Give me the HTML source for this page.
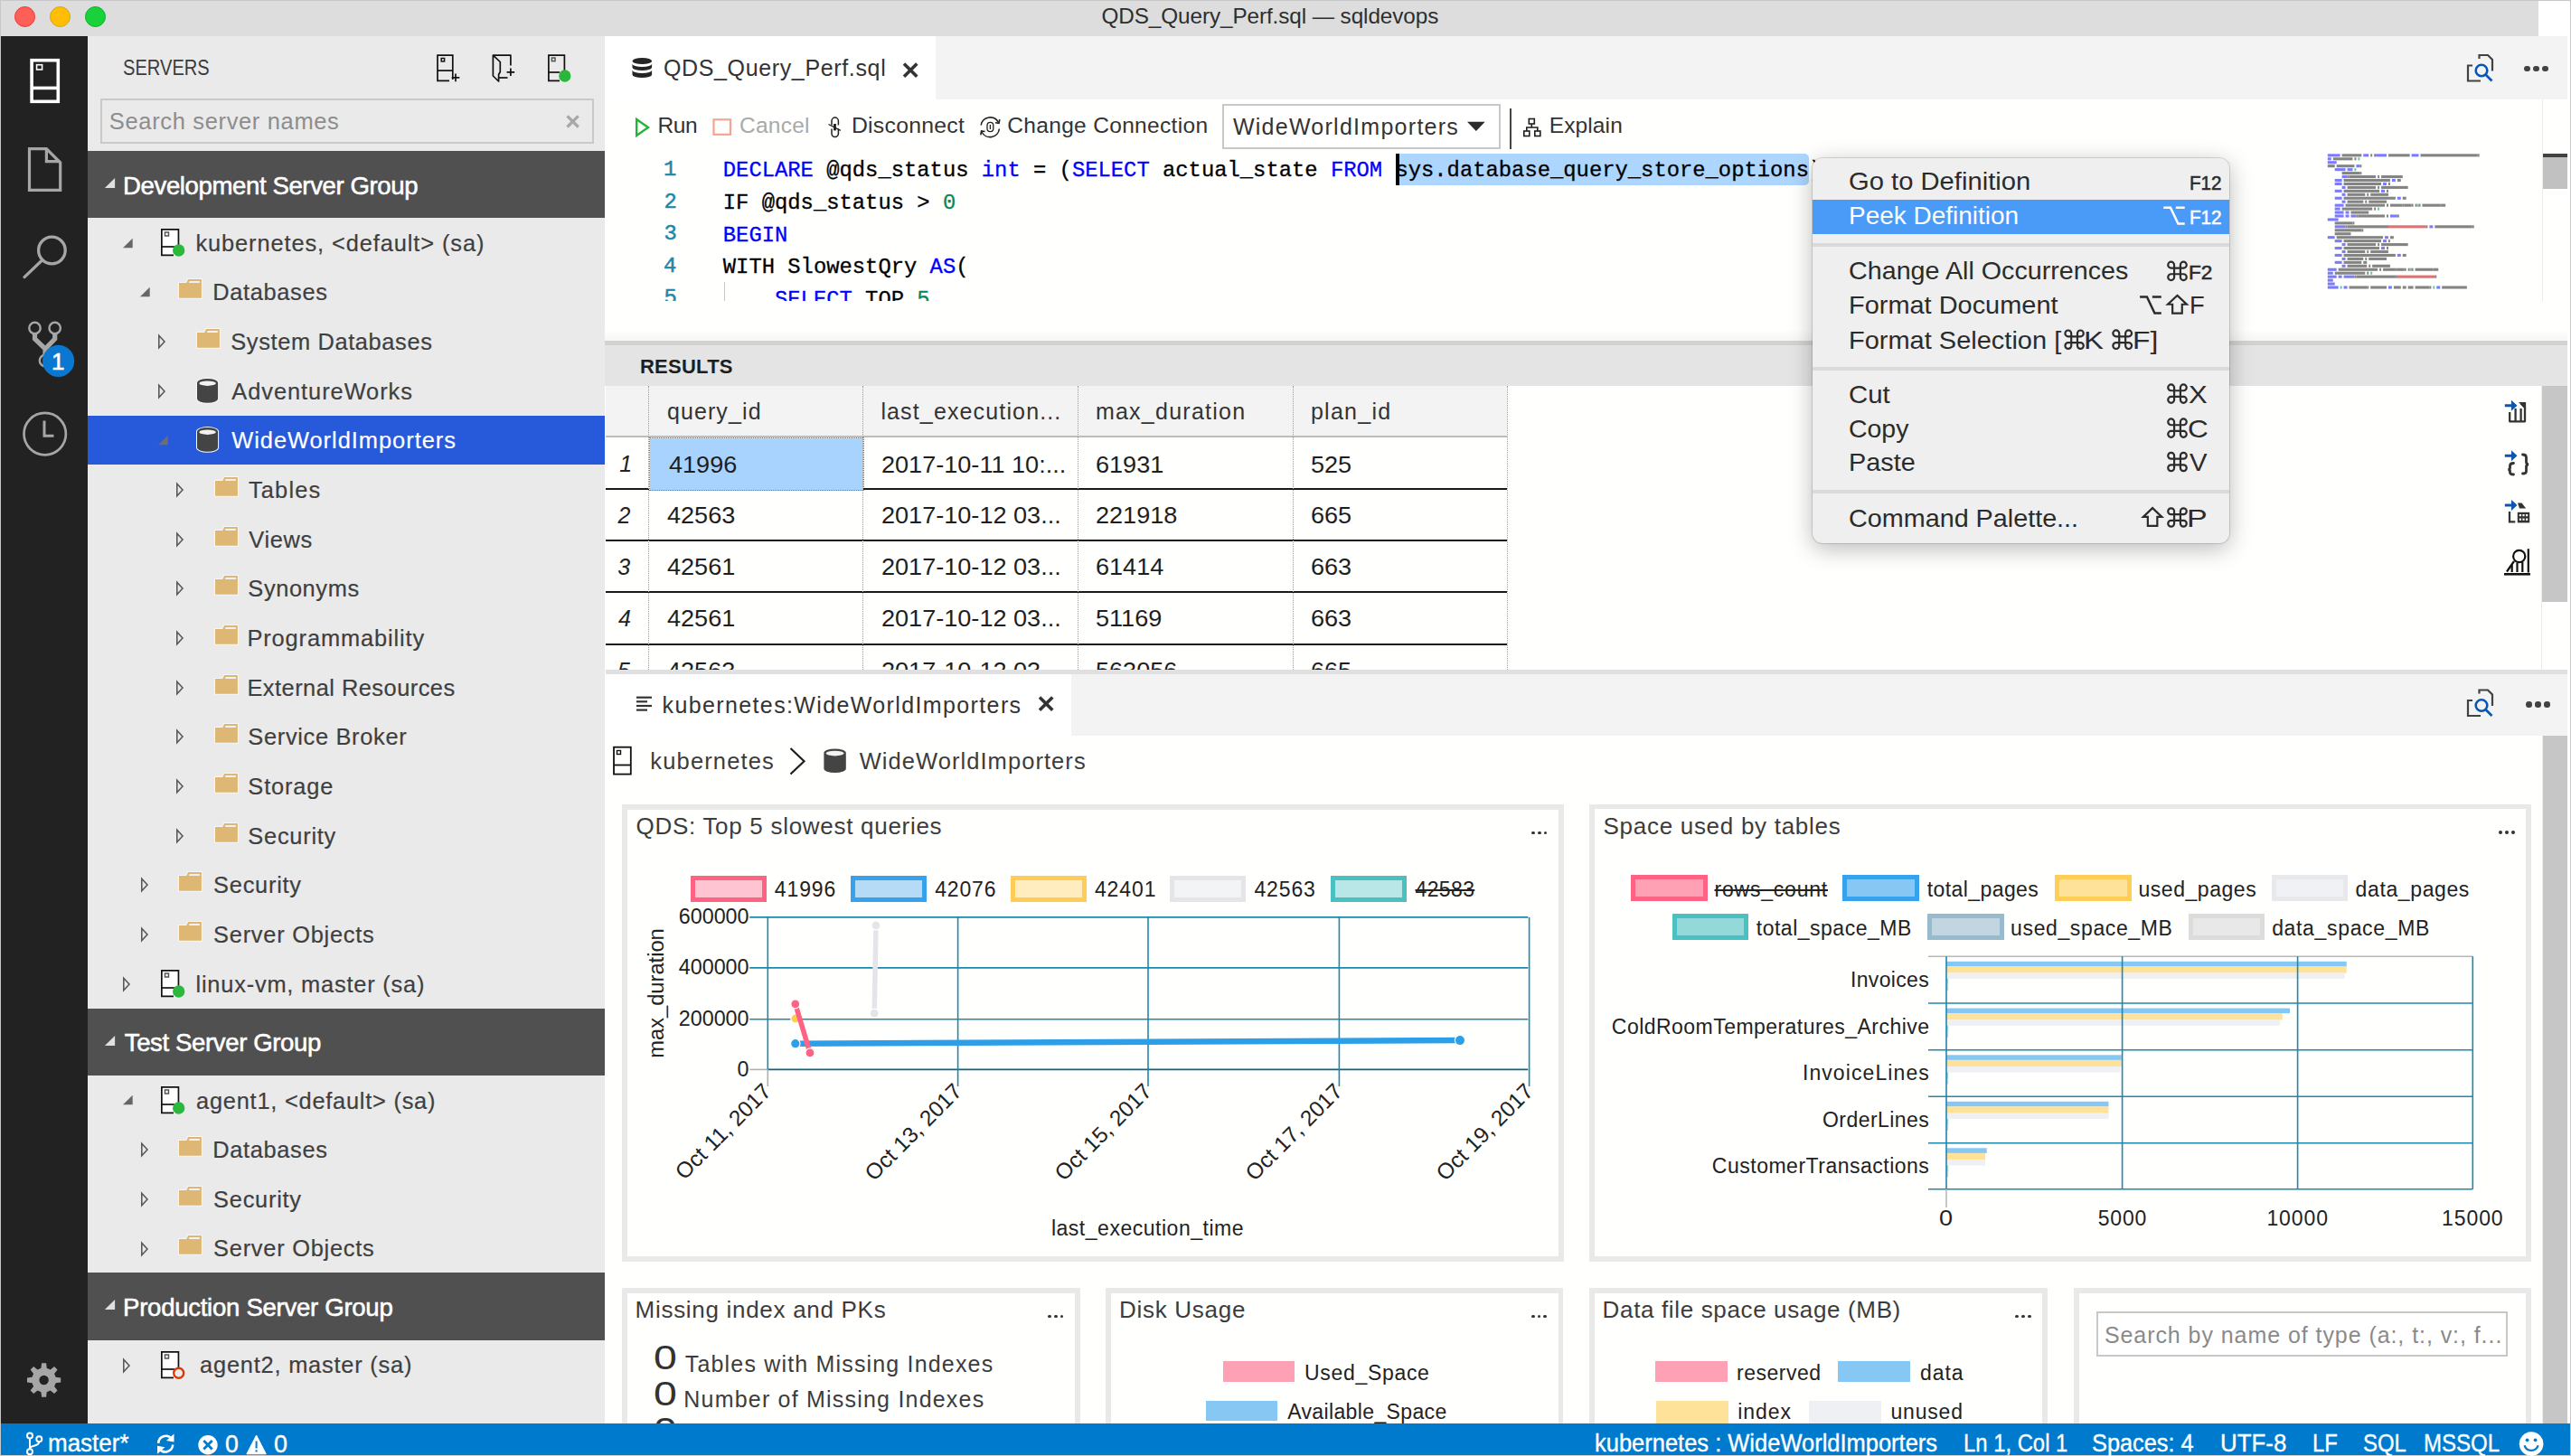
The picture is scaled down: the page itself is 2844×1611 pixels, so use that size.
<!DOCTYPE html><html><head><meta charset="utf-8"><style>
html,body{margin:0;padding:0;width:2844px;height:1611px;overflow:hidden;background:#fff;}
body>div,body>svg{position:absolute;}
.t{white-space:nowrap;}
</style></head><body>
<div style="left:0px;top:0px;width:2844px;height:1611px;background:#c8c8c8;"></div>
<div style="left:1px;top:1px;width:2842px;height:1609px;background:#ffffff;"></div>
<div style="left:1px;top:1px;width:2807px;height:39px;background:#dddddd;"></div>
<div style="left:16.0px;top:6.899999999999999px;width:23px;height:23px;box-sizing:border-box;border-radius:50%;background:#fe5f57;border:1.1px solid #e33e37"></div>
<div style="left:55.0px;top:6.899999999999999px;width:23px;height:23px;box-sizing:border-box;border-radius:50%;background:#ffbd04;border:1.1px solid #e3a204"></div>
<div style="left:94.0px;top:6.899999999999999px;width:23px;height:23px;box-sizing:border-box;border-radius:50%;background:#18d13b;border:1.1px solid #0bb128"></div>
<div class="t" style="left:1218.41px;top:5.93px;font-size:24.3px;line-height:24.3px;color:#2e2e2e;font-family:'Liberation Sans',sans-serif;letter-spacing:-0.086px;">QDS_Query_Perf.sql — sqldevops</div>
<div style="left:1px;top:40px;width:96px;height:1535px;background:#222222;"></div>
<svg style="left:20px;top:55px;" width="60" height="70" viewBox="20 55 60 70"><g fill="none" stroke="#fff" stroke-width="3.6"><rect x="35.1" y="66.7" width="29.2" height="45.6"/><line x1="35" y1="97.4" x2="64.5" y2="97.4"/><rect x="40.6" y="71.7" width="6" height="5.3" stroke-width="1.6"/></g></svg>
<svg style="left:20px;top:150px;" width="60" height="70" viewBox="20 150 60 70"><path d="M32.5 164.7 H51.4 L66.7 180 V210.3 H32.5 Z M51.4 164.7 V178.6 H66.7" fill="none" stroke="#a6a6a6" stroke-width="3.2"/></svg>
<svg style="left:15px;top:250px;" width="60" height="70" viewBox="15 250 60 70"><g fill="none" stroke="#a6a6a6" stroke-width="3.3" stroke-linecap="round"><circle cx="57.4" cy="277" r="14.8"/><line x1="46.5" y1="288" x2="27" y2="306.6"/></g></svg>
<svg style="left:20px;top:340px;" width="70" height="80" viewBox="20 340 70 80"><g fill="none" stroke="#a6a6a6"><circle cx="38.5" cy="363" r="6.2" stroke-width="2.4"/><circle cx="60.7" cy="363" r="6.2" stroke-width="2.4"/><circle cx="50" cy="399" r="6.2" stroke-width="2.4"/><path d="M38.5 369 V375 L50 386 L60.7 375 V369 M50 386 V393" stroke-width="5.2" stroke-linejoin="miter"/></g><circle cx="64.6" cy="399.4" r="17.6" fill="#0a78d0"/></svg>
<div class="t" style="left:56.99px;top:387.19px;font-size:26px;line-height:26px;color:#fff;font-family:'Liberation Sans',sans-serif;-webkit-text-stroke:0.6px #fff;">1</div>
<svg style="left:15px;top:445px;" width="70" height="70" viewBox="15 445 70 70"><g fill="none" stroke="#a6a6a6"><circle cx="49.7" cy="480.1" r="23.2" stroke-width="2.7"/><path d="M49 465.5 V482.3 H59.5" stroke-width="3"/></g></svg>
<svg style="left:20px;top:1500px;" width="60" height="60" viewBox="20 1500 60 60"><path d="M61.73,1523.85 L67.23,1524.50 L67.23,1529.50 L61.73,1530.15 L60.11,1534.05 L63.54,1538.41 L60.01,1541.94 L55.65,1538.51 L51.75,1540.13 L51.10,1545.63 L46.10,1545.63 L45.45,1540.13 L41.55,1538.51 L37.19,1541.94 L33.66,1538.41 L37.09,1534.05 L35.47,1530.15 L29.97,1529.50 L29.97,1524.50 L35.47,1523.85 L37.09,1519.95 L33.66,1515.59 L37.19,1512.06 L41.55,1515.49 L45.45,1513.87 L46.10,1508.37 L51.10,1508.37 L51.75,1513.87 L55.65,1515.49 L60.01,1512.06 L63.54,1515.59 L60.11,1519.95 Z M53.800000000000004,1527 A5.2,5.2 0 1,0 43.4,1527 A5.2,5.2 0 1,0 53.800000000000004,1527 Z" fill="#a6a6a6" fill-rule="evenodd"/></svg>
<div style="left:97px;top:40px;width:572px;height:1535px;background:#eaeaea;"></div>
<div class="t" style="left:136.49px;top:63.96px;font-size:23.2px;line-height:23.2px;color:#3b3b3b;font-family:'Liberation Sans',sans-serif;transform:scaleX(0.8676);transform-origin:0 0;">SERVERS</div>
<svg style="left:478px;top:55px;" width="35" height="40" viewBox="478 55 35 40"><g fill="none" stroke="#111" stroke-width="1.7"><path d="M500.8 88 V61.2 H484 V89.4 H497"/><line x1="484" y1="78.1" x2="500.8" y2="78.1"/><rect x="488.2" y="64.5" width="3.4" height="3.4" stroke-width="1.5"/><path d="M504 81.5 V90.2 M499.7 85.8 H508.3"/></g></svg>
<svg style="left:538px;top:55px;" width="35" height="40" viewBox="538 55 35 40"><g fill="none" stroke="#111" stroke-width="1.7" stroke-linejoin="round"><path d="M564.9 72.5 V61.2 H545.4 L553.3 68.5 V79.5 L551.6 82.5 V90 L545.4 84 V61.2"/><path d="M551.6 86 H561.5"/><path d="M564.9 75.5 V84 M560.6 79.8 H569.2"/></g></svg>
<svg style="left:600px;top:55px;" width="35" height="40" viewBox="600 55 35 40"><g fill="none" stroke="#111" stroke-width="1.7"><path d="M624.4 78 V61.2 H606.9 V89.4 H619"/><line x1="606.9" y1="80" x2="619" y2="80"/><rect x="610.4" y="64" width="3.6" height="3.6" stroke-width="1.5" stroke="#555"/></g><circle cx="624.8" cy="84" r="6.65" fill="#2ab83c"/></svg>
<div style="left:111px;top:108.5px;width:545.5px;height:50.0px;background:#c9c9c9;"></div>
<div style="left:113px;top:110.5px;width:541.5px;height:46.0px;background:#eaeaea;"></div>
<div class="t" style="left:120.85px;top:122.01px;font-size:25.5px;line-height:25.5px;color:#8d8d8d;font-family:'Liberation Sans',sans-serif;letter-spacing:0.648px;">Search server names</div>
<svg style="left:620px;top:120px;" width="30" height="30" viewBox="620 120 30 30"><g stroke="#a8a8a8" stroke-width="3.2"><line x1="627.5" y1="128.3" x2="639.7" y2="140.5"/><line x1="639.7" y1="128.3" x2="627.5" y2="140.5"/></g></svg>
<div style="left:97px;top:166.8px;width:572px;height:74.30000000000001px;background:#505050;"></div>
<svg style="left:110px;top:191.8px;" width="22" height="20" viewBox="110 191.8 22 20"><path d="M115.9 207.9 L127.1 196.70000000000002 V207.9 Z" fill="#e0e0e0"/></svg>
<div class="t" style="left:136.09px;top:191.73px;font-size:27.6px;line-height:27.6px;color:#ffffff;font-family:'Liberation Sans',sans-serif;letter-spacing:-0.408px;-webkit-text-stroke:0.55px #fff;">Development Server Group</div>
<svg style="left:133.6px;top:260.725px;" width="16" height="16" viewBox="133.6 260.725 16 16"><path d="M135.6 273.925 L146.29999999999998 263.52500000000003 V273.925 Z" fill="#666"/></svg>
<svg style="left:175.0px;top:250.22500000000002px;" width="32" height="38" viewBox="175.0 250.22500000000002 32 38"><g fill="none" stroke="#111" stroke-width="1.7"><rect x="178.85" y="254.07500000000002" width="18.6" height="28.5" fill="#fff" stroke="none"/><path d="M197.45 275.225 V254.07500000000002 H178.85 V282.57500000000005 H192.0"/><line x1="178.85" y1="273.225" x2="193.0" y2="273.225"/><rect x="182.5" y="257.225" width="4" height="4" stroke-width="1.5" stroke="#555"/></g><circle cx="197.7" cy="277.225" r="6.7" fill="#2cb83d"/></svg>
<div class="t" style="left:216.45px;top:256.82px;font-size:25.4px;line-height:25.4px;color:#3f3f3f;font-family:'Liberation Sans',sans-serif;letter-spacing:0.902px;-webkit-text-stroke:0.2px #3f3f3f;">kubernetes, &lt;default&gt; (sa)</div>
<svg style="left:153.2px;top:315.375px;" width="16" height="16" viewBox="153.2 315.375 16 16"><path d="M155.2 328.575 L165.89999999999998 318.175 V328.575 Z" fill="#666"/></svg>
<svg style="left:194.9px;top:306.47499999999997px;" width="32" height="28" viewBox="194.9 306.47499999999997 32 28"><path d="M196.9 312.47499999999997 H205.5 L207.20000000000002 308.47499999999997 H223.8 V331.275 H196.9 Z" fill="#f6f7fa"/><path d="M197.9 313.47499999999997 H206.1 L208.0 309.47499999999997 H222.8 V330.275 H197.9 Z" fill="#deb774"/><path d="M208.8 313.37499999999994 L209.5 311.47499999999997 H220.8 V313.37499999999994 Z" fill="#f0f2f8"/></svg>
<div class="t" style="left:235.20px;top:311.47px;font-size:25.4px;line-height:25.4px;color:#3f3f3f;font-family:'Liberation Sans',sans-serif;letter-spacing:0.664px;-webkit-text-stroke:0.2px #3f3f3f;">Databases</div>
<svg style="left:173.2px;top:368.22499999999997px;" width="14" height="20" viewBox="173.2 368.22499999999997 14 20"><path d="M176.0 371.42499999999995 L182.2 378.22499999999997 L176.0 385.025 Z" fill="none" stroke="#5a5a5a" stroke-width="1.6" stroke-linejoin="miter"/></svg>
<svg style="left:214.7px;top:361.12499999999994px;" width="32" height="28" viewBox="214.7 361.12499999999994 32 28"><path d="M216.7 367.12499999999994 H225.29999999999998 L227.0 363.12499999999994 H243.6 V385.92499999999995 H216.7 Z" fill="#f6f7fa"/><path d="M217.7 368.12499999999994 H225.89999999999998 L227.79999999999998 364.12499999999994 H242.6 V384.92499999999995 H217.7 Z" fill="#deb774"/><path d="M228.6 368.0249999999999 L229.29999999999998 366.12499999999994 H240.6 V368.0249999999999 Z" fill="#f0f2f8"/></svg>
<div class="t" style="left:255.22px;top:366.12px;font-size:25.4px;line-height:25.4px;color:#3f3f3f;font-family:'Liberation Sans',sans-serif;letter-spacing:0.640px;-webkit-text-stroke:0.2px #3f3f3f;">System Databases</div>
<svg style="left:173.2px;top:422.87499999999994px;" width="14" height="20" viewBox="173.2 422.87499999999994 14 20"><path d="M176.0 426.07499999999993 L182.2 432.87499999999994 L176.0 439.67499999999995 Z" fill="none" stroke="#5a5a5a" stroke-width="1.6" stroke-linejoin="miter"/></svg>
<svg style="left:215.1px;top:415.7749999999999px;" width="30" height="34" viewBox="215.1 415.7749999999999 30 34"><path d="M217.1 423.37499999999994 A12.55 5.6 0 0 1 242.2 423.37499999999994 V440.9749999999999 A12.55 5.6 0 0 1 217.1 440.9749999999999 Z" fill="#fafafa"/><path d="M218.1 423.37499999999994 A11.55 4.6 0 0 1 241.2 423.37499999999994 V440.9749999999999 A11.55 4.6 0 0 1 218.1 440.9749999999999 Z" fill="#444"/><ellipse cx="229.65" cy="423.97499999999997" rx="9.25" ry="2.6999999999999997" fill="#f2f2f2"/></svg>
<div class="t" style="left:256.36px;top:420.77px;font-size:25.4px;line-height:25.4px;color:#3f3f3f;font-family:'Liberation Sans',sans-serif;letter-spacing:0.951px;-webkit-text-stroke:0.2px #3f3f3f;">AdventureWorks</div>
<div style="left:97px;top:459.69999999999993px;width:572px;height:54.64999999999998px;background:#2759db;"></div>
<svg style="left:172.79999999999998px;top:479.32499999999993px;" width="16" height="16" viewBox="172.79999999999998 479.32499999999993 16 16"><path d="M174.79999999999998 492.5249999999999 L185.49999999999997 482.12499999999994 V492.5249999999999 Z" fill="#6e6e6e"/></svg>
<svg style="left:215.1px;top:470.4249999999999px;" width="30" height="34" viewBox="215.1 470.4249999999999 30 34"><path d="M217.1 478.0249999999999 A12.55 5.6 0 0 1 242.2 478.0249999999999 V495.6249999999999 A12.55 5.6 0 0 1 217.1 495.6249999999999 Z" fill="#ffffff"/><path d="M218.1 478.0249999999999 A11.55 4.6 0 0 1 241.2 478.0249999999999 V495.6249999999999 A11.55 4.6 0 0 1 218.1 495.6249999999999 Z" fill="#444"/><ellipse cx="229.65" cy="478.62499999999994" rx="9.25" ry="2.6999999999999997" fill="#f2f2f2"/></svg>
<div class="t" style="left:256.23px;top:475.42px;font-size:25.4px;line-height:25.4px;color:#ffffff;font-family:'Liberation Sans',sans-serif;letter-spacing:0.988px;-webkit-text-stroke:0.2px #fff;">WideWorldImporters</div>
<svg style="left:192.8px;top:532.175px;" width="14" height="20" viewBox="192.8 532.175 14 20"><path d="M195.60000000000002 535.375 L201.8 542.175 L195.60000000000002 548.9749999999999 Z" fill="none" stroke="#5a5a5a" stroke-width="1.6" stroke-linejoin="miter"/></svg>
<svg style="left:234.5px;top:525.0749999999999px;" width="32" height="28" viewBox="234.5 525.0749999999999 32 28"><path d="M236.5 531.0749999999999 H245.1 L246.8 527.0749999999999 H263.4 V549.8749999999999 H236.5 Z" fill="#f6f7fa"/><path d="M237.5 532.0749999999999 H245.7 L247.6 528.0749999999999 H262.4 V548.8749999999999 H237.5 Z" fill="#deb774"/><path d="M248.4 531.9749999999999 L249.1 530.0749999999999 H260.4 V531.9749999999999 Z" fill="#f0f2f8"/></svg>
<div class="t" style="left:274.98px;top:530.07px;font-size:25.4px;line-height:25.4px;color:#3f3f3f;font-family:'Liberation Sans',sans-serif;letter-spacing:1.158px;-webkit-text-stroke:0.2px #3f3f3f;">Tables</div>
<svg style="left:192.8px;top:586.8249999999999px;" width="14" height="20" viewBox="192.8 586.8249999999999 14 20"><path d="M195.60000000000002 590.025 L201.8 596.8249999999999 L195.60000000000002 603.6249999999999 Z" fill="none" stroke="#5a5a5a" stroke-width="1.6" stroke-linejoin="miter"/></svg>
<svg style="left:234.5px;top:579.7249999999999px;" width="32" height="28" viewBox="234.5 579.7249999999999 32 28"><path d="M236.5 585.7249999999999 H245.1 L246.8 581.7249999999999 H263.4 V604.5249999999999 H236.5 Z" fill="#f6f7fa"/><path d="M237.5 586.7249999999999 H245.7 L247.6 582.7249999999999 H262.4 V603.5249999999999 H237.5 Z" fill="#deb774"/><path d="M248.4 586.6249999999999 L249.1 584.7249999999999 H260.4 V586.6249999999999 Z" fill="#f0f2f8"/></svg>
<div class="t" style="left:275.36px;top:584.72px;font-size:25.4px;line-height:25.4px;color:#3f3f3f;font-family:'Liberation Sans',sans-serif;letter-spacing:0.626px;-webkit-text-stroke:0.2px #3f3f3f;">Views</div>
<svg style="left:192.8px;top:641.4749999999999px;" width="14" height="20" viewBox="192.8 641.4749999999999 14 20"><path d="M195.60000000000002 644.675 L201.8 651.4749999999999 L195.60000000000002 658.2749999999999 Z" fill="none" stroke="#5a5a5a" stroke-width="1.6" stroke-linejoin="miter"/></svg>
<svg style="left:234.5px;top:634.3749999999999px;" width="32" height="28" viewBox="234.5 634.3749999999999 32 28"><path d="M236.5 640.3749999999999 H245.1 L246.8 636.3749999999999 H263.4 V659.1749999999998 H236.5 Z" fill="#f6f7fa"/><path d="M237.5 641.3749999999999 H245.7 L247.6 637.3749999999999 H262.4 V658.1749999999998 H237.5 Z" fill="#deb774"/><path d="M248.4 641.2749999999999 L249.1 639.3749999999999 H260.4 V641.2749999999999 Z" fill="#f0f2f8"/></svg>
<div class="t" style="left:274.35px;top:639.37px;font-size:25.4px;line-height:25.4px;color:#3f3f3f;font-family:'Liberation Sans',sans-serif;letter-spacing:0.602px;-webkit-text-stroke:0.2px #3f3f3f;">Synonyms</div>
<svg style="left:192.8px;top:696.1249999999999px;" width="14" height="20" viewBox="192.8 696.1249999999999 14 20"><path d="M195.60000000000002 699.3249999999999 L201.8 706.1249999999999 L195.60000000000002 712.9249999999998 Z" fill="none" stroke="#5a5a5a" stroke-width="1.6" stroke-linejoin="miter"/></svg>
<svg style="left:234.5px;top:689.0249999999999px;" width="32" height="28" viewBox="234.5 689.0249999999999 32 28"><path d="M236.5 695.0249999999999 H245.1 L246.8 691.0249999999999 H263.4 V713.8249999999998 H236.5 Z" fill="#f6f7fa"/><path d="M237.5 696.0249999999999 H245.7 L247.6 692.0249999999999 H262.4 V712.8249999999998 H237.5 Z" fill="#deb774"/><path d="M248.4 695.9249999999998 L249.1 694.0249999999999 H260.4 V695.9249999999998 Z" fill="#f0f2f8"/></svg>
<div class="t" style="left:273.46px;top:694.02px;font-size:25.4px;line-height:25.4px;color:#3f3f3f;font-family:'Liberation Sans',sans-serif;letter-spacing:0.880px;-webkit-text-stroke:0.2px #3f3f3f;">Programmability</div>
<svg style="left:192.8px;top:750.7749999999999px;" width="14" height="20" viewBox="192.8 750.7749999999999 14 20"><path d="M195.60000000000002 753.9749999999999 L201.8 760.7749999999999 L195.60000000000002 767.5749999999998 Z" fill="none" stroke="#5a5a5a" stroke-width="1.6" stroke-linejoin="miter"/></svg>
<svg style="left:234.5px;top:743.6749999999998px;" width="32" height="28" viewBox="234.5 743.6749999999998 32 28"><path d="M236.5 749.6749999999998 H245.1 L246.8 745.6749999999998 H263.4 V768.4749999999998 H236.5 Z" fill="#f6f7fa"/><path d="M237.5 750.6749999999998 H245.7 L247.6 746.6749999999998 H262.4 V767.4749999999998 H237.5 Z" fill="#deb774"/><path d="M248.4 750.5749999999998 L249.1 748.6749999999998 H260.4 V750.5749999999998 Z" fill="#f0f2f8"/></svg>
<div class="t" style="left:273.46px;top:748.67px;font-size:25.4px;line-height:25.4px;color:#3f3f3f;font-family:'Liberation Sans',sans-serif;letter-spacing:0.477px;-webkit-text-stroke:0.2px #3f3f3f;">External Resources</div>
<svg style="left:192.8px;top:805.4249999999998px;" width="14" height="20" viewBox="192.8 805.4249999999998 14 20"><path d="M195.60000000000002 808.6249999999999 L201.8 815.4249999999998 L195.60000000000002 822.2249999999998 Z" fill="none" stroke="#5a5a5a" stroke-width="1.6" stroke-linejoin="miter"/></svg>
<svg style="left:234.5px;top:798.3249999999998px;" width="32" height="28" viewBox="234.5 798.3249999999998 32 28"><path d="M236.5 804.3249999999998 H245.1 L246.8 800.3249999999998 H263.4 V823.1249999999998 H236.5 Z" fill="#f6f7fa"/><path d="M237.5 805.3249999999998 H245.7 L247.6 801.3249999999998 H262.4 V822.1249999999998 H237.5 Z" fill="#deb774"/><path d="M248.4 805.2249999999998 L249.1 803.3249999999998 H260.4 V805.2249999999998 Z" fill="#f0f2f8"/></svg>
<div class="t" style="left:274.35px;top:803.32px;font-size:25.4px;line-height:25.4px;color:#3f3f3f;font-family:'Liberation Sans',sans-serif;letter-spacing:0.679px;-webkit-text-stroke:0.2px #3f3f3f;">Service Broker</div>
<svg style="left:192.8px;top:860.0749999999998px;" width="14" height="20" viewBox="192.8 860.0749999999998 14 20"><path d="M195.60000000000002 863.2749999999999 L201.8 870.0749999999998 L195.60000000000002 876.8749999999998 Z" fill="none" stroke="#5a5a5a" stroke-width="1.6" stroke-linejoin="miter"/></svg>
<svg style="left:234.5px;top:852.9749999999998px;" width="32" height="28" viewBox="234.5 852.9749999999998 32 28"><path d="M236.5 858.9749999999998 H245.1 L246.8 854.9749999999998 H263.4 V877.7749999999997 H236.5 Z" fill="#f6f7fa"/><path d="M237.5 859.9749999999998 H245.7 L247.6 855.9749999999998 H262.4 V876.7749999999997 H237.5 Z" fill="#deb774"/><path d="M248.4 859.8749999999998 L249.1 857.9749999999998 H260.4 V859.8749999999998 Z" fill="#f0f2f8"/></svg>
<div class="t" style="left:274.35px;top:857.97px;font-size:25.4px;line-height:25.4px;color:#3f3f3f;font-family:'Liberation Sans',sans-serif;letter-spacing:0.864px;-webkit-text-stroke:0.2px #3f3f3f;">Storage</div>
<svg style="left:192.8px;top:914.7249999999998px;" width="14" height="20" viewBox="192.8 914.7249999999998 14 20"><path d="M195.60000000000002 917.9249999999998 L201.8 924.7249999999998 L195.60000000000002 931.5249999999997 Z" fill="none" stroke="#5a5a5a" stroke-width="1.6" stroke-linejoin="miter"/></svg>
<svg style="left:234.5px;top:907.6249999999998px;" width="32" height="28" viewBox="234.5 907.6249999999998 32 28"><path d="M236.5 913.6249999999998 H245.1 L246.8 909.6249999999998 H263.4 V932.4249999999997 H236.5 Z" fill="#f6f7fa"/><path d="M237.5 914.6249999999998 H245.7 L247.6 910.6249999999998 H262.4 V931.4249999999997 H237.5 Z" fill="#deb774"/><path d="M248.4 914.5249999999997 L249.1 912.6249999999998 H260.4 V914.5249999999997 Z" fill="#f0f2f8"/></svg>
<div class="t" style="left:274.35px;top:912.62px;font-size:25.4px;line-height:25.4px;color:#3f3f3f;font-family:'Liberation Sans',sans-serif;letter-spacing:0.750px;-webkit-text-stroke:0.2px #3f3f3f;">Security</div>
<svg style="left:153.6px;top:969.3749999999998px;" width="14" height="20" viewBox="153.6 969.3749999999998 14 20"><path d="M156.4 972.5749999999998 L162.6 979.3749999999998 L156.4 986.1749999999997 Z" fill="none" stroke="#5a5a5a" stroke-width="1.6" stroke-linejoin="miter"/></svg>
<svg style="left:194.9px;top:962.2749999999997px;" width="32" height="28" viewBox="194.9 962.2749999999997 32 28"><path d="M196.9 968.2749999999997 H205.5 L207.20000000000002 964.2749999999997 H223.8 V987.0749999999997 H196.9 Z" fill="#f6f7fa"/><path d="M197.9 969.2749999999997 H206.1 L208.0 965.2749999999997 H222.8 V986.0749999999997 H197.9 Z" fill="#deb774"/><path d="M208.8 969.1749999999997 L209.5 967.2749999999997 H220.8 V969.1749999999997 Z" fill="#f0f2f8"/></svg>
<div class="t" style="left:236.09px;top:967.27px;font-size:25.4px;line-height:25.4px;color:#3f3f3f;font-family:'Liberation Sans',sans-serif;letter-spacing:0.750px;-webkit-text-stroke:0.2px #3f3f3f;">Security</div>
<svg style="left:153.6px;top:1024.0249999999996px;" width="14" height="20" viewBox="153.6 1024.0249999999996 14 20"><path d="M156.4 1027.2249999999997 L162.6 1034.0249999999996 L156.4 1040.8249999999996 Z" fill="none" stroke="#5a5a5a" stroke-width="1.6" stroke-linejoin="miter"/></svg>
<svg style="left:194.9px;top:1016.9249999999996px;" width="32" height="28" viewBox="194.9 1016.9249999999996 32 28"><path d="M196.9 1022.9249999999996 H205.5 L207.20000000000002 1018.9249999999996 H223.8 V1041.7249999999997 H196.9 Z" fill="#f6f7fa"/><path d="M197.9 1023.9249999999996 H206.1 L208.0 1019.9249999999996 H222.8 V1040.7249999999997 H197.9 Z" fill="#deb774"/><path d="M208.8 1023.8249999999996 L209.5 1021.9249999999996 H220.8 V1023.8249999999996 Z" fill="#f0f2f8"/></svg>
<div class="t" style="left:236.09px;top:1021.92px;font-size:25.4px;line-height:25.4px;color:#3f3f3f;font-family:'Liberation Sans',sans-serif;letter-spacing:0.755px;-webkit-text-stroke:0.2px #3f3f3f;">Server Objects</div>
<svg style="left:134.0px;top:1078.6749999999997px;" width="14" height="20" viewBox="134.0 1078.6749999999997 14 20"><path d="M136.8 1081.8749999999998 L143.0 1088.6749999999997 L136.8 1095.4749999999997 Z" fill="none" stroke="#5a5a5a" stroke-width="1.6" stroke-linejoin="miter"/></svg>
<svg style="left:175.0px;top:1069.9749999999997px;" width="32" height="38" viewBox="175.0 1069.9749999999997 32 38"><g fill="none" stroke="#111" stroke-width="1.7"><rect x="178.85" y="1073.8249999999996" width="18.6" height="28.5" fill="#fff" stroke="none"/><path d="M197.45 1094.9749999999997 V1073.8249999999996 H178.85 V1102.3249999999996 H192.0"/><line x1="178.85" y1="1092.9749999999997" x2="193.0" y2="1092.9749999999997"/><rect x="182.5" y="1076.9749999999997" width="4" height="4" stroke-width="1.5" stroke="#555"/></g><circle cx="197.7" cy="1096.9749999999997" r="6.7" fill="#2cb83d"/></svg>
<div class="t" style="left:216.45px;top:1076.57px;font-size:25.4px;line-height:25.4px;color:#3f3f3f;font-family:'Liberation Sans',sans-serif;letter-spacing:0.800px;-webkit-text-stroke:0.2px #3f3f3f;">linux-vm, master (sa)</div>
<div style="left:97px;top:1115.4999999999998px;width:572px;height:74.29999999999995px;background:#505050;"></div>
<svg style="left:110px;top:1140.4999999999998px;" width="22" height="20" viewBox="110 1140.4999999999998 22 20"><path d="M115.9 1156.5999999999997 L127.1 1145.3999999999999 V1156.5999999999997 Z" fill="#e0e0e0"/></svg>
<div class="t" style="left:137.75px;top:1140.43px;font-size:27.6px;line-height:27.6px;color:#ffffff;font-family:'Liberation Sans',sans-serif;letter-spacing:-0.395px;-webkit-text-stroke:0.55px #fff;">Test Server Group</div>
<svg style="left:133.6px;top:1209.4249999999997px;" width="16" height="16" viewBox="133.6 1209.4249999999997 16 16"><path d="M135.6 1222.6249999999998 L146.29999999999998 1212.2249999999997 V1222.6249999999998 Z" fill="#666"/></svg>
<svg style="left:175.0px;top:1198.9249999999997px;" width="32" height="38" viewBox="175.0 1198.9249999999997 32 38"><g fill="none" stroke="#111" stroke-width="1.7"><rect x="178.85" y="1202.7749999999996" width="18.6" height="28.5" fill="#fff" stroke="none"/><path d="M197.45 1223.9249999999997 V1202.7749999999996 H178.85 V1231.2749999999996 H192.0"/><line x1="178.85" y1="1221.9249999999997" x2="193.0" y2="1221.9249999999997"/><rect x="182.5" y="1205.9249999999997" width="4" height="4" stroke-width="1.5" stroke="#555"/></g><circle cx="197.7" cy="1225.9249999999997" r="6.7" fill="#2cb83d"/></svg>
<div class="t" style="left:217.08px;top:1205.52px;font-size:25.4px;line-height:25.4px;color:#3f3f3f;font-family:'Liberation Sans',sans-serif;letter-spacing:0.758px;-webkit-text-stroke:0.2px #3f3f3f;">agent1, &lt;default&gt; (sa)</div>
<svg style="left:153.6px;top:1262.2749999999999px;" width="14" height="20" viewBox="153.6 1262.2749999999999 14 20"><path d="M156.4 1265.475 L162.6 1272.2749999999999 L156.4 1279.0749999999998 Z" fill="none" stroke="#5a5a5a" stroke-width="1.6" stroke-linejoin="miter"/></svg>
<svg style="left:194.9px;top:1255.175px;" width="32" height="28" viewBox="194.9 1255.175 32 28"><path d="M196.9 1261.175 H205.5 L207.20000000000002 1257.175 H223.8 V1279.975 H196.9 Z" fill="#f6f7fa"/><path d="M197.9 1262.175 H206.1 L208.0 1258.175 H222.8 V1278.975 H197.9 Z" fill="#deb774"/><path d="M208.8 1262.075 L209.5 1260.175 H220.8 V1262.075 Z" fill="#f0f2f8"/></svg>
<div class="t" style="left:235.20px;top:1260.17px;font-size:25.4px;line-height:25.4px;color:#3f3f3f;font-family:'Liberation Sans',sans-serif;letter-spacing:0.664px;-webkit-text-stroke:0.2px #3f3f3f;">Databases</div>
<svg style="left:153.6px;top:1316.925px;" width="14" height="20" viewBox="153.6 1316.925 14 20"><path d="M156.4 1320.125 L162.6 1326.925 L156.4 1333.725 Z" fill="none" stroke="#5a5a5a" stroke-width="1.6" stroke-linejoin="miter"/></svg>
<svg style="left:194.9px;top:1309.825px;" width="32" height="28" viewBox="194.9 1309.825 32 28"><path d="M196.9 1315.825 H205.5 L207.20000000000002 1311.825 H223.8 V1334.625 H196.9 Z" fill="#f6f7fa"/><path d="M197.9 1316.825 H206.1 L208.0 1312.825 H222.8 V1333.625 H197.9 Z" fill="#deb774"/><path d="M208.8 1316.7250000000001 L209.5 1314.825 H220.8 V1316.7250000000001 Z" fill="#f0f2f8"/></svg>
<div class="t" style="left:236.09px;top:1314.82px;font-size:25.4px;line-height:25.4px;color:#3f3f3f;font-family:'Liberation Sans',sans-serif;letter-spacing:0.750px;-webkit-text-stroke:0.2px #3f3f3f;">Security</div>
<svg style="left:153.6px;top:1371.575px;" width="14" height="20" viewBox="153.6 1371.575 14 20"><path d="M156.4 1374.775 L162.6 1381.575 L156.4 1388.375 Z" fill="none" stroke="#5a5a5a" stroke-width="1.6" stroke-linejoin="miter"/></svg>
<svg style="left:194.9px;top:1364.4750000000001px;" width="32" height="28" viewBox="194.9 1364.4750000000001 32 28"><path d="M196.9 1370.4750000000001 H205.5 L207.20000000000002 1366.4750000000001 H223.8 V1389.275 H196.9 Z" fill="#f6f7fa"/><path d="M197.9 1371.4750000000001 H206.1 L208.0 1367.4750000000001 H222.8 V1388.275 H197.9 Z" fill="#deb774"/><path d="M208.8 1371.3750000000002 L209.5 1369.4750000000001 H220.8 V1371.3750000000002 Z" fill="#f0f2f8"/></svg>
<div class="t" style="left:236.09px;top:1369.47px;font-size:25.4px;line-height:25.4px;color:#3f3f3f;font-family:'Liberation Sans',sans-serif;letter-spacing:0.755px;-webkit-text-stroke:0.2px #3f3f3f;">Server Objects</div>
<div style="left:97px;top:1408.4px;width:572px;height:74.29999999999995px;background:#505050;"></div>
<svg style="left:110px;top:1433.4px;" width="22" height="20" viewBox="110 1433.4 22 20"><path d="M115.9 1449.5 L127.1 1438.3000000000002 V1449.5 Z" fill="#e0e0e0"/></svg>
<div class="t" style="left:136.09px;top:1433.33px;font-size:27.6px;line-height:27.6px;color:#ffffff;font-family:'Liberation Sans',sans-serif;letter-spacing:-0.297px;-webkit-text-stroke:0.55px #fff;">Production Server Group</div>
<svg style="left:134.0px;top:1500.525px;" width="14" height="20" viewBox="134.0 1500.525 14 20"><path d="M136.8 1503.7250000000001 L143.0 1510.525 L136.8 1517.325 Z" fill="none" stroke="#5a5a5a" stroke-width="1.6" stroke-linejoin="miter"/></svg>
<svg style="left:175.0px;top:1491.825px;" width="32" height="38" viewBox="175.0 1491.825 32 38"><g fill="none" stroke="#111" stroke-width="1.7"><rect x="178.85" y="1495.675" width="18.6" height="28.5" fill="#fff" stroke="none"/><path d="M197.45 1516.825 V1495.675 H178.85 V1524.175 H192.0"/><line x1="178.85" y1="1514.825" x2="193.0" y2="1514.825"/><rect x="182.5" y="1498.825" width="4" height="4" stroke-width="1.5" stroke="#555"/></g><circle cx="197.7" cy="1519.125" r="5.5" fill="#ebebeb" stroke="#dc3a0a" stroke-width="2.4"/></svg>
<div class="t" style="left:221.08px;top:1498.42px;font-size:25.4px;line-height:25.4px;color:#3f3f3f;font-family:'Liberation Sans',sans-serif;letter-spacing:0.785px;-webkit-text-stroke:0.2px #3f3f3f;">agent2, master (sa)</div>
<div style="left:669px;top:40px;width:2171px;height:70px;background:#f3f3f3;"></div>
<div style="left:669px;top:40px;width:366px;height:70px;background:#ffffff;"></div>
<div style="left:669px;top:110px;width:2171px;height:267px;background:#fffffe;"></div>
<svg style="left:695px;top:60px;" width="30" height="30" viewBox="695 60 30 30"><g fill="#252525"><ellipse cx="710.3" cy="67.5" rx="10.8" ry="3.6"/><path d="M699.5 70.5 A10.8 3.6 0 0 0 721.1 70.5 V74.5 A10.8 3.6 0 0 1 699.5 74.5 Z"/><path d="M699.5 77.5 A10.8 3.6 0 0 0 721.1 77.5 V82.5 A10.8 3.6 0 0 1 699.5 82.5 Z"/></g></svg>
<div class="t" style="left:733.88px;top:63.33px;font-size:25px;line-height:25px;color:#333333;font-family:'Liberation Sans',sans-serif;letter-spacing:0.647px;">QDS_Query_Perf.sql</div>
<svg style="left:995px;top:65px;" width="25" height="25" viewBox="995 65 25 25"><g stroke="#333" stroke-width="3.6"><line x1="1000" y1="70.5" x2="1014.3" y2="84.8"/><line x1="1014.3" y1="70.5" x2="1000" y2="84.8"/></g></svg>
<svg style="left:2722px;top:58px;" width="40" height="38" viewBox="2722 58 40 38"><g fill="none" stroke="#424242" stroke-width="2.2"><path d="M2742.5 65 V61 H2752 L2757 66 V78.5"/><path d="M2735 72.5 H2730 V89.5 H2744"/></g><g fill="none" stroke="#0756b5" stroke-width="2.6"><circle cx="2745" cy="78" r="6.3"/><line x1="2749.5" y1="82.5" x2="2756.5" y2="89.5"/></g></svg>
<div style="left:2792.3px;top:72.5px;width:6.4px;height:6.4px;border-radius:50%;background:#424242"></div>
<div style="left:2802.3px;top:72.5px;width:6.4px;height:6.4px;border-radius:50%;background:#424242"></div>
<div style="left:2812.3px;top:72.5px;width:6.4px;height:6.4px;border-radius:50%;background:#424242"></div>
<svg style="left:698px;top:125px;" width="26" height="32" viewBox="698 125 26 32"><path d="M704.2 132 L717 141 L704.2 150 Z" fill="none" stroke="#22b43a" stroke-width="2.4" stroke-linejoin="miter"/></svg>
<div class="t" style="left:727.54px;top:127.16px;font-size:24.5px;line-height:24.5px;color:#333333;font-family:'Liberation Sans',sans-serif;letter-spacing:-0.453px;">Run</div>
<svg style="left:785px;top:128px;" width="28" height="26" viewBox="785 128 28 26"><rect x="789.5" y="132.3" width="18.5" height="16.5" fill="none" stroke="#f3a593" stroke-width="2.2"/></svg>
<div class="t" style="left:818.07px;top:127.16px;font-size:24.5px;line-height:24.5px;color:#a9a9a9;font-family:'Liberation Sans',sans-serif;letter-spacing:0.225px;">Cancel</div>
<svg style="left:912px;top:126px;" width="24" height="30" viewBox="912 126 24 30"><g fill="none" stroke="#222" stroke-width="1.5"><path d="M920 138.5 V133.8 a3.7 3.7 0 0 1 7.4 0 V138.5"/><path d="M920 142.5 V147.8 a3.7 3.7 0 0 0 7.4 0 V142.5"/></g><rect x="922.2" y="137" width="2.6" height="7.4" fill="#111"/><line x1="916.5" y1="137.5" x2="929.8" y2="144.4" stroke="#222" stroke-width="1.4"/></svg>
<div class="t" style="left:941.92px;top:126.90px;font-size:24.8px;line-height:24.8px;color:#333333;font-family:'Liberation Sans',sans-serif;letter-spacing:0.252px;">Disconnect</div>
<svg style="left:1080px;top:126px;" width="32" height="30" viewBox="1080 126 32 30"><g fill="none" stroke="#222" stroke-width="1.6"><path d="M1085.2 138.5 A10.3 10.3 0 0 1 1104.5 135.5"/><path d="M1105.4 142.5 A10.3 10.3 0 0 1 1086 146"/><path d="M1101 135.8 L1105 136.3 L1105.8 132"/><path d="M1089.5 145.5 L1085.6 145 L1084.8 149.3"/><rect x="1092" y="135.4" width="6.8" height="10.3" rx="3.4" stroke-width="1.3"/><line x1="1095.4" y1="138" x2="1095.4" y2="143" stroke-width="1.3"/></g></svg>
<div class="t" style="left:1114.28px;top:127.16px;font-size:24.5px;line-height:24.5px;color:#333333;font-family:'Liberation Sans',sans-serif;letter-spacing:0.327px;">Change Connection</div>
<div style="left:1352px;top:115px;width:308px;height:50px;background:#c8c8c8;"></div>
<div style="left:1354px;top:117px;width:304px;height:46px;background:#ffffff;"></div>
<div class="t" style="left:1363.88px;top:127.83px;font-size:25px;line-height:25px;color:#333333;font-family:'Liberation Sans',sans-serif;letter-spacing:1.272px;">WideWorldImporters</div>
<svg style="left:1618px;top:130px;" width="30" height="20" viewBox="1618 130 30 20"><path d="M1623 134.8 H1642.7 L1632.85 145 Z" fill="#2b2b2b"/></svg>
<div style="left:1670.3px;top:120px;width:2.0px;height:45px;background:#444444;"></div>
<svg style="left:1680px;top:125px;" width="30" height="32" viewBox="1680 125 30 32"><g fill="none" stroke="#1e1e1e" stroke-width="1.6"><rect x="1691.3" y="131.5" width="6" height="5.5"/><rect x="1685.8" y="145" width="6" height="5.5"/><rect x="1697.8" y="145" width="6" height="5.5"/><path d="M1694.3 137 V141 H1688.8 V145 M1694.3 141 H1700.8 V145"/></g></svg>
<div class="t" style="left:1713.74px;top:127.16px;font-size:24.5px;line-height:24.5px;color:#333333;font-family:'Liberation Sans',sans-serif;letter-spacing:0.115px;">Explain</div>
<div style="left:1544px;top:170.2px;width:457px;height:34.8px;background:#add6ff;border-radius:5px"></div>
<div class="t" style="left:734.09px;top:176.14px;font-size:23.83px;line-height:23.83px;color:#1f88a8;font-family:'Liberation Mono',monospace;-webkit-text-stroke:0.5px #1f88a8;">1</div>
<div class="t" style="left:799.80px;top:177.44px;font-size:23.83px;line-height:23.83px;font-family:'Liberation Mono',monospace;color:#0000ff;white-space:pre;-webkit-text-stroke:0.3px #0000ff">DECLARE</div>
<div class="t" style="left:899.90px;top:177.44px;font-size:23.83px;line-height:23.83px;font-family:'Liberation Mono',monospace;color:#000000;white-space:pre;-webkit-text-stroke:0.3px #000000"> @qds_status </div>
<div class="t" style="left:1085.80px;top:177.44px;font-size:23.83px;line-height:23.83px;font-family:'Liberation Mono',monospace;color:#0000ff;white-space:pre;-webkit-text-stroke:0.3px #0000ff">int</div>
<div class="t" style="left:1128.70px;top:177.44px;font-size:23.83px;line-height:23.83px;font-family:'Liberation Mono',monospace;color:#000000;white-space:pre;-webkit-text-stroke:0.3px #000000"> = (</div>
<div class="t" style="left:1185.90px;top:177.44px;font-size:23.83px;line-height:23.83px;font-family:'Liberation Mono',monospace;color:#0000ff;white-space:pre;-webkit-text-stroke:0.3px #0000ff">SELECT</div>
<div class="t" style="left:1271.70px;top:177.44px;font-size:23.83px;line-height:23.83px;font-family:'Liberation Mono',monospace;color:#000000;white-space:pre;-webkit-text-stroke:0.3px #000000"> actual_state </div>
<div class="t" style="left:1471.90px;top:177.44px;font-size:23.83px;line-height:23.83px;font-family:'Liberation Mono',monospace;color:#0000ff;white-space:pre;-webkit-text-stroke:0.3px #0000ff">FROM</div>
<div class="t" style="left:1529.10px;top:177.44px;font-size:23.83px;line-height:23.83px;font-family:'Liberation Mono',monospace;color:#000000;white-space:pre;-webkit-text-stroke:0.3px #000000"> sys.database_query_store_options)</div>
<div class="t" style="left:734.57px;top:211.94px;font-size:23.83px;line-height:23.83px;color:#1f88a8;font-family:'Liberation Mono',monospace;-webkit-text-stroke:0.5px #1f88a8;">2</div>
<div class="t" style="left:799.80px;top:213.24px;font-size:23.83px;line-height:23.83px;font-family:'Liberation Mono',monospace;color:#000000;white-space:pre;-webkit-text-stroke:0.3px #000000">IF @qds_status &gt; </div>
<div class="t" style="left:1042.90px;top:213.24px;font-size:23.83px;line-height:23.83px;font-family:'Liberation Mono',monospace;color:#09885a;white-space:pre;-webkit-text-stroke:0.3px #09885a">0</div>
<div class="t" style="left:734.45px;top:247.44px;font-size:23.83px;line-height:23.83px;color:#1f88a8;font-family:'Liberation Mono',monospace;-webkit-text-stroke:0.5px #1f88a8;">3</div>
<div class="t" style="left:799.80px;top:248.74px;font-size:23.83px;line-height:23.83px;font-family:'Liberation Mono',monospace;color:#0000ff;white-space:pre;-webkit-text-stroke:0.3px #0000ff">BEGIN</div>
<div class="t" style="left:734.09px;top:282.94px;font-size:23.83px;line-height:23.83px;color:#1f88a8;font-family:'Liberation Mono',monospace;-webkit-text-stroke:0.5px #1f88a8;">4</div>
<div class="t" style="left:799.80px;top:284.24px;font-size:23.83px;line-height:23.83px;font-family:'Liberation Mono',monospace;color:#000000;white-space:pre;-webkit-text-stroke:0.3px #000000">WITH SlowestQry </div>
<div class="t" style="left:1028.60px;top:284.24px;font-size:23.83px;line-height:23.83px;font-family:'Liberation Mono',monospace;color:#0000ff;white-space:pre;-webkit-text-stroke:0.3px #0000ff">AS</div>
<div class="t" style="left:1057.20px;top:284.24px;font-size:23.83px;line-height:23.83px;font-family:'Liberation Mono',monospace;color:#000000;white-space:pre;-webkit-text-stroke:0.3px #000000">(</div>
<div class="t" style="left:734.45px;top:318.44px;font-size:23.83px;line-height:23.83px;color:#1f88a8;font-family:'Liberation Mono',monospace;-webkit-text-stroke:0.5px #1f88a8;">5</div>
<div class="t" style="left:857.00px;top:319.74px;font-size:23.83px;line-height:23.83px;font-family:'Liberation Mono',monospace;color:#0000ff;white-space:pre;-webkit-text-stroke:0.3px #0000ff">SELECT</div>
<div class="t" style="left:957.10px;top:319.74px;font-size:23.83px;line-height:23.83px;font-family:'Liberation Mono',monospace;color:#000000;white-space:pre;-webkit-text-stroke:0.3px #000000">TOP</div>
<div class="t" style="left:1014.30px;top:319.74px;font-size:23.83px;line-height:23.83px;font-family:'Liberation Mono',monospace;color:#09885a;white-space:pre;-webkit-text-stroke:0.3px #09885a">5</div>
<div style="left:800.5px;top:312px;width:1.0px;height:21px;background:#c8c8c8;"></div>
<div style="left:1544px;top:170px;width:4px;height:35px;background:#000000;"></div>
<svg style="left:2570px;top:165px;" width="240" height="170" viewBox="2570 165 240 170"><g opacity="0.62"><rect x="2574.80" y="170.30" width="13.83" height="3.1" fill="#2b2bff"/><rect x="2590.60" y="170.30" width="21.73" height="3.1" fill="#3a3a3a"/><rect x="2614.30" y="170.30" width="5.93" height="3.1" fill="#2b2bff"/><rect x="2622.20" y="170.30" width="1.98" height="3.1" fill="#3a3a3a"/><rect x="2626.15" y="170.30" width="1.98" height="3.1" fill="#3a3a3a"/><rect x="2628.12" y="170.30" width="11.85" height="3.1" fill="#2b2bff"/><rect x="2641.95" y="170.30" width="23.70" height="3.1" fill="#3a3a3a"/><rect x="2667.62" y="170.30" width="7.90" height="3.1" fill="#2b2bff"/><rect x="2677.50" y="170.30" width="63.20" height="3.1" fill="#3a3a3a"/><rect x="2740.70" y="170.30" width="1.98" height="3.1" fill="#3a3a3a"/><rect x="2574.80" y="174.25" width="3.95" height="3.1" fill="#2b2bff"/><rect x="2580.73" y="174.25" width="21.73" height="3.1" fill="#3a3a3a"/><rect x="2604.43" y="174.25" width="1.98" height="3.1" fill="#3a3a3a"/><rect x="2608.38" y="174.25" width="1.98" height="3.1" fill="#17a06b"/><rect x="2574.80" y="178.20" width="9.88" height="3.1" fill="#2b2bff"/><rect x="2574.80" y="182.15" width="7.90" height="3.1" fill="#3a3a3a"/><rect x="2584.68" y="182.15" width="19.75" height="3.1" fill="#3a3a3a"/><rect x="2606.40" y="182.15" width="3.95" height="3.1" fill="#2b2bff"/><rect x="2610.35" y="182.15" width="1.98" height="3.1" fill="#3a3a3a"/><rect x="2582.70" y="186.10" width="11.85" height="3.1" fill="#2b2bff"/><rect x="2596.53" y="186.10" width="5.93" height="3.1" fill="#2b2bff"/><rect x="2604.43" y="186.10" width="1.98" height="3.1" fill="#17a06b"/><rect x="2590.60" y="190.05" width="19.75" height="3.1" fill="#3a3a3a"/><rect x="2610.35" y="190.05" width="1.98" height="3.1" fill="#3a3a3a"/><rect x="2590.60" y="194.00" width="5.93" height="3.1" fill="#2b2bff"/><rect x="2596.53" y="194.00" width="1.98" height="3.1" fill="#3a3a3a"/><rect x="2598.50" y="194.00" width="29.62" height="3.1" fill="#3a3a3a"/><rect x="2630.10" y="194.00" width="1.98" height="3.1" fill="#3a3a3a"/><rect x="2634.05" y="194.00" width="23.70" height="3.1" fill="#3a3a3a"/><rect x="2582.70" y="197.95" width="7.90" height="3.1" fill="#2b2bff"/><rect x="2592.58" y="197.95" width="51.35" height="3.1" fill="#3a3a3a"/><rect x="2645.90" y="197.95" width="3.95" height="3.1" fill="#2b2bff"/><rect x="2651.83" y="197.95" width="3.95" height="3.1" fill="#3a3a3a"/><rect x="2582.70" y="201.90" width="7.90" height="3.1" fill="#2b2bff"/><rect x="2592.58" y="201.90" width="41.48" height="3.1" fill="#3a3a3a"/><rect x="2636.03" y="201.90" width="3.95" height="3.1" fill="#2b2bff"/><rect x="2641.95" y="201.90" width="1.98" height="3.1" fill="#3a3a3a"/><rect x="2590.60" y="205.85" width="3.95" height="3.1" fill="#2b2bff"/><rect x="2596.53" y="205.85" width="31.60" height="3.1" fill="#3a3a3a"/><rect x="2630.10" y="205.85" width="1.98" height="3.1" fill="#3a3a3a"/><rect x="2634.05" y="205.85" width="29.62" height="3.1" fill="#3a3a3a"/><rect x="2582.70" y="209.80" width="7.90" height="3.1" fill="#2b2bff"/><rect x="2592.58" y="209.80" width="39.50" height="3.1" fill="#3a3a3a"/><rect x="2634.05" y="209.80" width="3.95" height="3.1" fill="#2b2bff"/><rect x="2639.98" y="209.80" width="1.98" height="3.1" fill="#3a3a3a"/><rect x="2590.60" y="213.75" width="3.95" height="3.1" fill="#2b2bff"/><rect x="2596.53" y="213.75" width="19.75" height="3.1" fill="#3a3a3a"/><rect x="2618.25" y="213.75" width="1.98" height="3.1" fill="#3a3a3a"/><rect x="2622.20" y="213.75" width="19.75" height="3.1" fill="#3a3a3a"/><rect x="2582.70" y="217.70" width="7.90" height="3.1" fill="#2b2bff"/><rect x="2592.58" y="217.70" width="57.28" height="3.1" fill="#3a3a3a"/><rect x="2651.83" y="217.70" width="3.95" height="3.1" fill="#2b2bff"/><rect x="2657.75" y="217.70" width="3.95" height="3.1" fill="#3a3a3a"/><rect x="2590.60" y="221.65" width="3.95" height="3.1" fill="#2b2bff"/><rect x="2596.53" y="221.65" width="17.78" height="3.1" fill="#3a3a3a"/><rect x="2616.28" y="221.65" width="1.98" height="3.1" fill="#3a3a3a"/><rect x="2620.23" y="221.65" width="19.75" height="3.1" fill="#3a3a3a"/><rect x="2582.70" y="225.60" width="9.88" height="3.1" fill="#2b2bff"/><rect x="2594.55" y="225.60" width="43.45" height="3.1" fill="#3a3a3a"/><rect x="2639.98" y="225.60" width="1.98" height="3.1" fill="#3a3a3a"/><rect x="2643.93" y="225.60" width="13.83" height="3.1" fill="#3a3a3a"/><rect x="2657.75" y="225.60" width="1.98" height="3.1" fill="#3a3a3a"/><rect x="2659.73" y="225.60" width="7.90" height="3.1" fill="#3a3a3a"/><rect x="2667.62" y="225.60" width="1.98" height="3.1" fill="#3a3a3a"/><rect x="2671.58" y="225.60" width="1.98" height="3.1" fill="#3a3a3a"/><rect x="2673.55" y="225.60" width="1.98" height="3.1" fill="#17a06b"/><rect x="2675.53" y="225.60" width="1.98" height="3.1" fill="#3a3a3a"/><rect x="2679.48" y="225.60" width="19.75" height="3.1" fill="#3a3a3a"/><rect x="2699.23" y="225.60" width="5.93" height="3.1" fill="#3a3a3a"/><rect x="2582.70" y="229.55" width="5.93" height="3.1" fill="#2b2bff"/><rect x="2590.60" y="229.55" width="33.58" height="3.1" fill="#3a3a3a"/><rect x="2626.15" y="229.55" width="1.98" height="3.1" fill="#3a3a3a"/><rect x="2630.10" y="229.55" width="1.98" height="3.1" fill="#17a06b"/><rect x="2582.70" y="233.50" width="9.88" height="3.1" fill="#2b2bff"/><rect x="2594.55" y="233.50" width="3.95" height="3.1" fill="#2b2bff"/><rect x="2600.48" y="233.50" width="19.75" height="3.1" fill="#3a3a3a"/><rect x="2582.70" y="237.45" width="9.88" height="3.1" fill="#2b2bff"/><rect x="2594.55" y="237.45" width="3.95" height="3.1" fill="#2b2bff"/><rect x="2600.48" y="237.45" width="5.93" height="3.1" fill="#2b2bff"/><rect x="2606.40" y="237.45" width="1.98" height="3.1" fill="#3a3a3a"/><rect x="2608.38" y="237.45" width="29.62" height="3.1" fill="#3a3a3a"/><rect x="2639.98" y="237.45" width="1.98" height="3.1" fill="#3a3a3a"/><rect x="2643.93" y="237.45" width="7.90" height="3.1" fill="#2b2bff"/><rect x="2651.83" y="237.45" width="1.98" height="3.1" fill="#3a3a3a"/><rect x="2574.80" y="241.40" width="11.85" height="3.1" fill="#2b2bff"/><rect x="2582.70" y="245.35" width="19.75" height="3.1" fill="#3a3a3a"/><rect x="2602.45" y="245.35" width="1.98" height="3.1" fill="#3a3a3a"/><rect x="2582.70" y="249.30" width="11.85" height="3.1" fill="#2b2bff"/><rect x="2594.55" y="249.30" width="1.98" height="3.1" fill="#3a3a3a"/><rect x="2596.53" y="249.30" width="43.45" height="3.1" fill="#3a3a3a"/><rect x="2639.98" y="249.30" width="1.98" height="3.1" fill="#3a3a3a"/><rect x="2641.95" y="249.30" width="41.48" height="3.1" fill="#d11a1a"/><rect x="2683.43" y="249.30" width="1.98" height="3.1" fill="#3a3a3a"/><rect x="2687.38" y="249.30" width="3.95" height="3.1" fill="#2b2bff"/><rect x="2693.30" y="249.30" width="41.48" height="3.1" fill="#3a3a3a"/><rect x="2734.78" y="249.30" width="1.98" height="3.1" fill="#3a3a3a"/><rect x="2582.70" y="253.25" width="29.62" height="3.1" fill="#3a3a3a"/><rect x="2612.33" y="253.25" width="1.98" height="3.1" fill="#3a3a3a"/><rect x="2582.70" y="257.20" width="17.78" height="3.1" fill="#3a3a3a"/><rect x="2574.80" y="261.15" width="7.90" height="3.1" fill="#2b2bff"/><rect x="2584.68" y="261.15" width="51.35" height="3.1" fill="#3a3a3a"/><rect x="2638.00" y="261.15" width="3.95" height="3.1" fill="#2b2bff"/><rect x="2643.93" y="261.15" width="3.95" height="3.1" fill="#3a3a3a"/><rect x="2582.70" y="265.10" width="7.90" height="3.1" fill="#2b2bff"/><rect x="2592.58" y="265.10" width="41.48" height="3.1" fill="#3a3a3a"/><rect x="2636.03" y="265.10" width="3.95" height="3.1" fill="#2b2bff"/><rect x="2641.95" y="265.10" width="1.98" height="3.1" fill="#3a3a3a"/><rect x="2590.60" y="269.05" width="3.95" height="3.1" fill="#2b2bff"/><rect x="2596.53" y="269.05" width="31.60" height="3.1" fill="#3a3a3a"/><rect x="2630.10" y="269.05" width="1.98" height="3.1" fill="#3a3a3a"/><rect x="2634.05" y="269.05" width="29.62" height="3.1" fill="#3a3a3a"/><rect x="2582.70" y="273.00" width="7.90" height="3.1" fill="#2b2bff"/><rect x="2592.58" y="273.00" width="39.50" height="3.1" fill="#3a3a3a"/><rect x="2634.05" y="273.00" width="3.95" height="3.1" fill="#2b2bff"/><rect x="2639.98" y="273.00" width="1.98" height="3.1" fill="#3a3a3a"/><rect x="2590.60" y="276.95" width="3.95" height="3.1" fill="#2b2bff"/><rect x="2596.53" y="276.95" width="19.75" height="3.1" fill="#3a3a3a"/><rect x="2618.25" y="276.95" width="1.98" height="3.1" fill="#3a3a3a"/><rect x="2622.20" y="276.95" width="19.75" height="3.1" fill="#3a3a3a"/><rect x="2582.70" y="280.90" width="7.90" height="3.1" fill="#2b2bff"/><rect x="2592.58" y="280.90" width="57.28" height="3.1" fill="#3a3a3a"/><rect x="2651.83" y="280.90" width="3.95" height="3.1" fill="#2b2bff"/><rect x="2657.75" y="280.90" width="3.95" height="3.1" fill="#3a3a3a"/><rect x="2590.60" y="284.85" width="3.95" height="3.1" fill="#2b2bff"/><rect x="2596.53" y="284.85" width="17.78" height="3.1" fill="#3a3a3a"/><rect x="2616.28" y="284.85" width="1.98" height="3.1" fill="#3a3a3a"/><rect x="2620.23" y="284.85" width="19.75" height="3.1" fill="#3a3a3a"/><rect x="2582.70" y="288.80" width="7.90" height="3.1" fill="#2b2bff"/><rect x="2592.58" y="288.80" width="19.75" height="3.1" fill="#3a3a3a"/><rect x="2614.30" y="288.80" width="3.95" height="3.1" fill="#3a3a3a"/><rect x="2590.60" y="292.75" width="3.95" height="3.1" fill="#2b2bff"/><rect x="2596.53" y="292.75" width="21.73" height="3.1" fill="#3a3a3a"/><rect x="2620.23" y="292.75" width="1.98" height="3.1" fill="#3a3a3a"/><rect x="2624.18" y="292.75" width="19.75" height="3.1" fill="#3a3a3a"/><rect x="2574.80" y="296.70" width="9.88" height="3.1" fill="#2b2bff"/><rect x="2586.65" y="296.70" width="43.45" height="3.1" fill="#3a3a3a"/><rect x="2632.08" y="296.70" width="1.98" height="3.1" fill="#3a3a3a"/><rect x="2636.03" y="296.70" width="13.83" height="3.1" fill="#3a3a3a"/><rect x="2649.85" y="296.70" width="1.98" height="3.1" fill="#3a3a3a"/><rect x="2651.83" y="296.70" width="7.90" height="3.1" fill="#3a3a3a"/><rect x="2659.73" y="296.70" width="1.98" height="3.1" fill="#3a3a3a"/><rect x="2663.68" y="296.70" width="1.98" height="3.1" fill="#3a3a3a"/><rect x="2665.65" y="296.70" width="1.98" height="3.1" fill="#17a06b"/><rect x="2667.62" y="296.70" width="1.98" height="3.1" fill="#3a3a3a"/><rect x="2671.58" y="296.70" width="19.75" height="3.1" fill="#3a3a3a"/><rect x="2691.33" y="296.70" width="5.93" height="3.1" fill="#3a3a3a"/><rect x="2574.80" y="300.65" width="5.93" height="3.1" fill="#2b2bff"/><rect x="2582.70" y="300.65" width="33.58" height="3.1" fill="#3a3a3a"/><rect x="2618.25" y="300.65" width="1.98" height="3.1" fill="#3a3a3a"/><rect x="2622.20" y="300.65" width="1.98" height="3.1" fill="#17a06b"/><rect x="2574.80" y="304.60" width="9.88" height="3.1" fill="#2b2bff"/><rect x="2586.65" y="304.60" width="3.95" height="3.1" fill="#2b2bff"/><rect x="2592.58" y="304.60" width="11.85" height="3.1" fill="#2b2bff"/><rect x="2604.43" y="304.60" width="1.98" height="3.1" fill="#3a3a3a"/><rect x="2606.40" y="304.60" width="43.45" height="3.1" fill="#3a3a3a"/><rect x="2649.85" y="304.60" width="1.98" height="3.1" fill="#3a3a3a"/><rect x="2651.83" y="304.60" width="41.48" height="3.1" fill="#d11a1a"/><rect x="2693.30" y="304.60" width="1.98" height="3.1" fill="#3a3a3a"/><rect x="2574.80" y="308.55" width="5.93" height="3.1" fill="#2b2bff"/><rect x="2574.80" y="312.50" width="7.90" height="3.1" fill="#2b2bff"/><rect x="2574.80" y="316.45" width="11.85" height="3.1" fill="#2b2bff"/><rect x="2588.62" y="316.45" width="1.98" height="3.1" fill="#17a06b"/><rect x="2592.58" y="316.45" width="3.95" height="3.1" fill="#2b2bff"/><rect x="2598.50" y="316.45" width="19.75" height="3.1" fill="#3a3a3a"/><rect x="2618.25" y="316.45" width="1.98" height="3.1" fill="#3a3a3a"/><rect x="2622.20" y="316.45" width="13.83" height="3.1" fill="#3a3a3a"/><rect x="2636.03" y="316.45" width="3.95" height="3.1" fill="#3a3a3a"/><rect x="2641.95" y="316.45" width="3.95" height="3.1" fill="#2b2bff"/><rect x="2647.88" y="316.45" width="7.90" height="3.1" fill="#3a3a3a"/><rect x="2657.75" y="316.45" width="3.95" height="3.1" fill="#3a3a3a"/><rect x="2663.68" y="316.45" width="5.93" height="3.1" fill="#3a3a3a"/><rect x="2671.58" y="316.45" width="15.80" height="3.1" fill="#3a3a3a"/><rect x="2687.38" y="316.45" width="1.98" height="3.1" fill="#3a3a3a"/><rect x="2691.33" y="316.45" width="1.98" height="3.1" fill="#17a06b"/><rect x="2695.28" y="316.45" width="3.95" height="3.1" fill="#2b2bff"/><rect x="2701.20" y="316.45" width="27.65" height="3.1" fill="#3a3a3a"/></g></svg>
<div style="left:2812px;top:110px;width:1px;height:223px;background:#ececec;"></div>
<div style="left:2813px;top:170px;width:27px;height:39px;background:#c1c1c1;"></div>
<div style="left:2813px;top:170px;width:27px;height:4px;background:#424242;"></div>
<div style="left:669px;top:333px;width:2136px;height:44px;background:#fffffe;"></div>
<div style="left:669px;top:365px;width:2171px;height:12px;background:linear-gradient(rgba(0,0,0,0),rgba(0,0,0,0.035));"></div>
<div style="left:669px;top:377.4px;width:2171px;height:5.600000000000023px;background:#d2d2d2;"></div>
<div style="left:669px;top:382px;width:2171px;height:44.5px;background:#e4e4e4;"></div>
<div class="t" style="left:707.97px;top:394.67px;font-size:22px;line-height:22px;color:#1e1e1e;font-family:'Liberation Sans',sans-serif;font-weight:700;letter-spacing:0.253px;">RESULTS</div>
<div style="left:669px;top:426.5px;width:2171px;height:315.5px;background:#fffffe;"></div>
<div style="left:670px;top:427px;width:997px;height:56px;background:#f3f3f4;"></div>
<div style="left:670px;top:481.5px;width:997px;height:2.0px;background:#bdbdbd;"></div>
<div class="t" style="left:737.90px;top:443.33px;font-size:25px;line-height:25px;color:#333333;font-family:'Liberation Sans',sans-serif;letter-spacing:1.107px;">query_id</div>
<div class="t" style="left:974.38px;top:443.33px;font-size:25px;line-height:25px;color:#333333;font-family:'Liberation Sans',sans-serif;letter-spacing:1.141px;">last_execution...</div>
<div class="t" style="left:1211.88px;top:443.33px;font-size:25px;line-height:25px;color:#333333;font-family:'Liberation Sans',sans-serif;letter-spacing:1.250px;">max_duration</div>
<div class="t" style="left:1449.88px;top:443.33px;font-size:25px;line-height:25px;color:#333333;font-family:'Liberation Sans',sans-serif;letter-spacing:1.271px;">plan_id</div>
<div style="left:718.5px;top:484.5px;width:236.0px;height:58.0px;background:#a9d3ff;"></div>
<div style="left:717.5px;top:484px;width:238px;height:59px;box-sizing:border-box;border:1.6px dotted #7a7a7a;"></div>
<div class="t" style="left:685.25px;top:500.53px;font-size:25px;line-height:25px;color:#222222;font-family:'Liberation Sans',sans-serif;font-style:italic;">1</div>
<div class="t" style="left:740.36px;top:502.26px;font-size:25.2px;line-height:25.2px;color:#1e1e1e;font-family:'Liberation Sans',sans-serif;transform:scaleX(1.0750);transform-origin:0 0;">41996</div>
<div class="t" style="left:974.65px;top:502.26px;font-size:25.2px;line-height:25.2px;color:#1e1e1e;font-family:'Liberation Sans',sans-serif;transform:scaleX(1.0750);transform-origin:0 0;">2017-10-11 10:...</div>
<div class="t" style="left:1212.15px;top:502.26px;font-size:25.2px;line-height:25.2px;color:#1e1e1e;font-family:'Liberation Sans',sans-serif;transform:scaleX(1.0750);transform-origin:0 0;">61931</div>
<div class="t" style="left:1450.42px;top:502.26px;font-size:25.2px;line-height:25.2px;color:#1e1e1e;font-family:'Liberation Sans',sans-serif;transform:scaleX(1.0750);transform-origin:0 0;">525</div>
<div style="left:670px;top:540.0px;width:48px;height:2.2000000000000455px;background:#1a1a1a;"></div>
<div style="left:955px;top:540.0px;width:712px;height:2.2000000000000455px;background:#1a1a1a;"></div>
<div class="t" style="left:683.50px;top:557.93px;font-size:25px;line-height:25px;color:#222222;font-family:'Liberation Sans',sans-serif;font-style:italic;">2</div>
<div class="t" style="left:738.36px;top:557.76px;font-size:25.2px;line-height:25.2px;color:#1e1e1e;font-family:'Liberation Sans',sans-serif;transform:scaleX(1.0750);transform-origin:0 0;">42563</div>
<div class="t" style="left:974.65px;top:557.76px;font-size:25.2px;line-height:25.2px;color:#1e1e1e;font-family:'Liberation Sans',sans-serif;transform:scaleX(1.0750);transform-origin:0 0;">2017-10-12 03...</div>
<div class="t" style="left:1212.15px;top:557.76px;font-size:25.2px;line-height:25.2px;color:#1e1e1e;font-family:'Liberation Sans',sans-serif;transform:scaleX(1.0750);transform-origin:0 0;">221918</div>
<div class="t" style="left:1450.15px;top:557.76px;font-size:25.2px;line-height:25.2px;color:#1e1e1e;font-family:'Liberation Sans',sans-serif;transform:scaleX(1.0750);transform-origin:0 0;">665</div>
<div style="left:670px;top:597.0px;width:997px;height:2.2000000000000455px;background:#1a1a1a;"></div>
<div class="t" style="left:683.25px;top:615.23px;font-size:25px;line-height:25px;color:#222222;font-family:'Liberation Sans',sans-serif;font-style:italic;">3</div>
<div class="t" style="left:738.36px;top:615.06px;font-size:25.2px;line-height:25.2px;color:#1e1e1e;font-family:'Liberation Sans',sans-serif;transform:scaleX(1.0750);transform-origin:0 0;">42561</div>
<div class="t" style="left:974.65px;top:615.06px;font-size:25.2px;line-height:25.2px;color:#1e1e1e;font-family:'Liberation Sans',sans-serif;transform:scaleX(1.0750);transform-origin:0 0;">2017-10-12 03...</div>
<div class="t" style="left:1212.15px;top:615.06px;font-size:25.2px;line-height:25.2px;color:#1e1e1e;font-family:'Liberation Sans',sans-serif;transform:scaleX(1.0750);transform-origin:0 0;">61414</div>
<div class="t" style="left:1450.15px;top:615.06px;font-size:25.2px;line-height:25.2px;color:#1e1e1e;font-family:'Liberation Sans',sans-serif;transform:scaleX(1.0750);transform-origin:0 0;">663</div>
<div style="left:670px;top:654.3px;width:997px;height:2.2000000000000455px;background:#1a1a1a;"></div>
<div class="t" style="left:684.00px;top:672.43px;font-size:25px;line-height:25px;color:#222222;font-family:'Liberation Sans',sans-serif;font-style:italic;">4</div>
<div class="t" style="left:738.36px;top:672.26px;font-size:25.2px;line-height:25.2px;color:#1e1e1e;font-family:'Liberation Sans',sans-serif;transform:scaleX(1.0750);transform-origin:0 0;">42561</div>
<div class="t" style="left:974.65px;top:672.26px;font-size:25.2px;line-height:25.2px;color:#1e1e1e;font-family:'Liberation Sans',sans-serif;transform:scaleX(1.0750);transform-origin:0 0;">2017-10-12 03...</div>
<div class="t" style="left:1212.42px;top:672.26px;font-size:25.2px;line-height:25.2px;color:#1e1e1e;font-family:'Liberation Sans',sans-serif;transform:scaleX(1.0750);transform-origin:0 0;">51169</div>
<div class="t" style="left:1450.15px;top:672.26px;font-size:25.2px;line-height:25.2px;color:#1e1e1e;font-family:'Liberation Sans',sans-serif;transform:scaleX(1.0750);transform-origin:0 0;">663</div>
<div style="left:670px;top:711.5px;width:997px;height:2.2000000000000455px;background:#1a1a1a;"></div>
<div class="t" style="left:683.00px;top:729.73px;font-size:25px;line-height:25px;color:#222222;font-family:'Liberation Sans',sans-serif;font-style:italic;">5</div>
<div class="t" style="left:738.36px;top:729.56px;font-size:25.2px;line-height:25.2px;color:#1e1e1e;font-family:'Liberation Sans',sans-serif;transform:scaleX(1.0750);transform-origin:0 0;">42563</div>
<div class="t" style="left:974.65px;top:729.56px;font-size:25.2px;line-height:25.2px;color:#1e1e1e;font-family:'Liberation Sans',sans-serif;transform:scaleX(1.0750);transform-origin:0 0;">2017-10-12 03...</div>
<div class="t" style="left:1212.42px;top:729.56px;font-size:25.2px;line-height:25.2px;color:#1e1e1e;font-family:'Liberation Sans',sans-serif;transform:scaleX(1.0750);transform-origin:0 0;">563056</div>
<div class="t" style="left:1450.15px;top:729.56px;font-size:25.2px;line-height:25.2px;color:#1e1e1e;font-family:'Liberation Sans',sans-serif;transform:scaleX(1.0750);transform-origin:0 0;">665</div>
<div style="left:669px;top:741px;width:998px;height:1px;background:#fffffe;"></div>
<div style="left:716.9px;top:427px;width:0;height:314px;border-left:1.5px dotted #9a9a9a;"></div>
<div style="left:954.0px;top:427px;width:0;height:314px;border-left:1.5px dotted #9a9a9a;"></div>
<div style="left:1191.5px;top:427px;width:0;height:314px;border-left:1.5px dotted #9a9a9a;"></div>
<div style="left:1429.5px;top:427px;width:0;height:314px;border-left:1.5px dotted #9a9a9a;"></div>
<div style="left:1666.5px;top:427px;width:0;height:314px;border-left:1.5px dotted #9a9a9a;"></div>
<div style="left:670px;top:741px;width:2170px;height:4.5px;background:#e0e0e0;"></div>
<div style="left:2811px;top:426.5px;width:1px;height:315.5px;background:#ececec;"></div>
<div style="left:2812px;top:426.5px;width:28px;height:239.5px;background:#c6c6c6;"></div>
<svg style="left:2765px;top:437px;" width="40" height="36" viewBox="2765 437 40 36"><g fill="none" stroke="#333" stroke-width="2.3" stroke-linejoin="round"><path d="M2776.2 456 V466.3 H2793 V451 L2788.5 446.3"/><line x1="2782.6" y1="452" x2="2782.6" y2="466"/><line x1="2788.6" y1="452" x2="2788.6" y2="466"/></g><path d="M2786 445 L2794.1 445 V453 Z" fill="#333"/><path d="M2770.8 447.2 H2778 V442.7 L2784.5 448.7 L2778 454.7 V450.2 H2770.8 Z" fill="#0a56b0"/></svg>
<svg style="left:2765px;top:493px;" width="40" height="36" viewBox="2765 493 40 36"><g fill="none" stroke="#333" stroke-width="2.8" stroke-linecap="round"><path d="M2780.5 512.5 q-4 0 -4 3 v2.2 q0 1.5 -2 1.8 q2 0.3 2 1.8 v1.5 q0 2.2 4 2.2"/><path d="M2790.5 503 q4 0 4 3 v5 q0 2.5 2.5 2.8 q-2.5 0.3 -2.5 2.8 v5.2 q0 2.2 -4 2.2"/></g><path d="M2770.8 502.7 H2778 V498.2 L2784.5 504.2 L2778 510.2 V505.7 H2770.8 Z" fill="#0a56b0"/></svg>
<svg style="left:2765px;top:548px;" width="40" height="36" viewBox="2765 548 40 36"><path d="M2776 566 V577.3 H2782.3" fill="none" stroke="#333" stroke-width="2.3"/><path d="M2785 556.5 H2789.5 L2794.2 562.5 H2787 Z" fill="#333"/><rect x="2784.8" y="566.8" width="13.4" height="11.6" fill="#333"/><g fill="#fff"><rect x="2786.8" y="569" width="2.2" height="2.2"/><rect x="2790.4" y="569" width="2.2" height="2.2"/><rect x="2794" y="569" width="2.2" height="2.2"/><rect x="2786.8" y="573.6" width="2.2" height="2.2"/><rect x="2790.4" y="573.6" width="2.2" height="2.2"/><rect x="2794" y="573.6" width="2.2" height="2.2"/></g><path d="M2770.8 557.5 H2778 V553 L2784.5 559 L2778 565 V560.5 H2770.8 Z" fill="#0a56b0"/></svg>
<svg style="left:2765px;top:603px;" width="40" height="38" viewBox="2765 603 40 38"><g fill="none" stroke="#111" stroke-width="2.2"><line x1="2770" y1="635.3" x2="2798.9" y2="635.3" stroke-width="2.6"/><line x1="2796.8" y1="607.2" x2="2796.8" y2="633.5"/><circle cx="2786.7" cy="615.5" r="6.6"/><line x1="2773" y1="632.5" x2="2781" y2="621"/><line x1="2778.7" y1="625" x2="2778.7" y2="633"/><line x1="2784.5" y1="623" x2="2784.5" y2="633"/><line x1="2790.3" y1="622" x2="2790.3" y2="633"/></g></svg>
<div style="left:669px;top:745.5px;width:2171px;height:68.5px;background:#f3f3f3;"></div>
<div style="left:669px;top:745.5px;width:516px;height:68.5px;background:#ffffff;"></div>
<svg style="left:700px;top:765px;" width="26" height="28" viewBox="700 765 26 28"><g stroke="#333" stroke-width="2.2"><line x1="704" y1="771.7" x2="721" y2="771.7"/><line x1="704" y1="776.3" x2="716" y2="776.3"/><line x1="704" y1="781" x2="721" y2="781"/><line x1="704" y1="785.6" x2="716" y2="785.6"/></g></svg>
<div class="t" style="left:732.58px;top:767.83px;font-size:25px;line-height:25px;color:#333333;font-family:'Liberation Sans',sans-serif;letter-spacing:1.375px;">kubernetes:WideWorldImporters</div>
<svg style="left:1145px;top:765px;" width="25" height="25" viewBox="1145 765 25 25"><g stroke="#333" stroke-width="3.6"><line x1="1150" y1="771.5" x2="1164.3" y2="785.8"/><line x1="1164.3" y1="771.5" x2="1150" y2="785.8"/></g></svg>
<svg style="left:2722px;top:755px;" width="40" height="38" viewBox="2722 755 40 38"><g fill="none" stroke="#424242" stroke-width="2.2"><path d="M2742.5 767.5 V763.5 H2752 L2757 768.5 V781"/><path d="M2735 775 H2730 V792 H2744"/></g><g fill="none" stroke="#0756b5" stroke-width="2.6"><circle cx="2745" cy="780.5" r="6.3"/><line x1="2749.5" y1="785" x2="2756.5" y2="792"/></g></svg>
<div style="left:2794.3px;top:776.3px;width:6.4px;height:6.4px;border-radius:50%;background:#424242"></div>
<div style="left:2804.3px;top:776.3px;width:6.4px;height:6.4px;border-radius:50%;background:#424242"></div>
<div style="left:2814.3px;top:776.3px;width:6.4px;height:6.4px;border-radius:50%;background:#424242"></div>
<div style="left:669px;top:814px;width:2171px;height:761px;background:#fffffe;"></div>
<div style="left:2813px;top:814px;width:27px;height:761px;background:#c6c6c6;"></div>
<div style="left:2812px;top:814px;width:1px;height:761px;background:#ececec;"></div>
<svg style="left:674px;top:822px;" width="30" height="40" viewBox="674 822 30 40"><g fill="none" stroke="#111" stroke-width="1.8"><rect x="679" y="826.7" width="18.8" height="29.9"/><line x1="679" y1="846.5" x2="697.8" y2="846.5"/><rect x="682.5" y="830.5" width="4" height="4" stroke-width="1.4"/></g></svg>
<div class="t" style="left:719.34px;top:830.41px;font-size:25.5px;line-height:25.5px;color:#3c3c3c;font-family:'Liberation Sans',sans-serif;letter-spacing:1.147px;">kubernetes</div>
<svg style="left:868px;top:822px;" width="28" height="40" viewBox="868 822 28 40"><path d="M874.5 828 L889.5 842.3 L874.5 856.5" fill="none" stroke="#1e1e1e" stroke-width="2.2"/></svg>
<svg style="left:908px;top:825px" width="32" height="34" viewBox="908 825 32 34"><path d="M911.4 833 A12.2 4.6 0 0 1 935.8 833 V850.5 A12.2 4.6 0 0 1 911.4 850.5 Z" fill="#444"/><ellipse cx="923.6" cy="833.6" rx="10" ry="2.8" fill="#f2f2f2"/></svg>
<div class="t" style="left:950.67px;top:830.41px;font-size:25.5px;line-height:25.5px;color:#3c3c3c;font-family:'Liberation Sans',sans-serif;letter-spacing:1.065px;">WideWorldImporters</div>
<div style="left:688px;top:890px;width:1041.5px;height:506px;background:#e9e9e9;"></div>
<div style="left:693.7px;top:895.7px;width:1030.1px;height:494.5999999999999px;background:#fffffe;"></div>
<div class="t" style="left:703.53px;top:901.29px;font-size:26px;line-height:26px;color:#3c3c3c;font-family:'Liberation Sans',sans-serif;letter-spacing:0.710px;">QDS: Top 5 slowest queries</div>
<div style="left:1694.00px;top:919.50px;width:3.8px;height:3.8px;border-radius:50%;background:#333"></div>
<div style="left:1700.80px;top:919.50px;width:3.8px;height:3.8px;border-radius:50%;background:#333"></div>
<div style="left:1707.60px;top:919.50px;width:3.8px;height:3.8px;border-radius:50%;background:#333"></div>
<div style="left:763.7px;top:968.6px;width:84px;height:29px;box-sizing:border-box;border:5px solid #ff6384;background:#ffc4d1"></div>
<div class="t" style="left:856.84px;top:973.13px;font-size:23px;line-height:23px;color:#222222;font-family:'Liberation Sans',sans-serif;letter-spacing:0.860px;">41996</div>
<div style="left:941px;top:968.6px;width:84px;height:29px;box-sizing:border-box;border:5px solid #36a2eb;background:#b5dbf6"></div>
<div class="t" style="left:1034.14px;top:973.13px;font-size:23px;line-height:23px;color:#222222;font-family:'Liberation Sans',sans-serif;letter-spacing:0.860px;">42076</div>
<div style="left:1117.8px;top:968.6px;width:84px;height:29px;box-sizing:border-box;border:5px solid #ffcd56;background:#ffecbf"></div>
<div class="t" style="left:1210.94px;top:973.13px;font-size:23px;line-height:23px;color:#222222;font-family:'Liberation Sans',sans-serif;letter-spacing:0.889px;">42401</div>
<div style="left:1294.3px;top:968.6px;width:84px;height:29px;box-sizing:border-box;border:5px solid #e4e5e9;background:#f3f4f6"></div>
<div class="t" style="left:1387.44px;top:973.13px;font-size:23px;line-height:23px;color:#222222;font-family:'Liberation Sans',sans-serif;letter-spacing:0.860px;">42563</div>
<div style="left:1472.4px;top:968.6px;width:84px;height:29px;box-sizing:border-box;border:5px solid #4bc0c0;background:#b9e6e6"></div>
<div class="t" style="left:1565.54px;top:973.13px;font-size:23px;line-height:23px;color:#222222;font-family:'Liberation Sans',sans-serif;letter-spacing:0.360px;text-decoration:line-through;">42583</div>
<svg style="left:700px;top:1000px;" width="1010" height="220" viewBox="700 1000 1010 220"><line x1="829.2" y1="1014.9" x2="1690.3" y2="1014.9" stroke="#1f88ac" stroke-width="1.6"/><line x1="829.2" y1="1070.9" x2="1690.3" y2="1070.9" stroke="#1f88ac" stroke-width="1.6"/><line x1="829.2" y1="1127.8" x2="1690.3" y2="1127.8" stroke="#1f88ac" stroke-width="1.6"/><line x1="849.3" y1="1183.4" x2="1690.3" y2="1183.4" stroke="#0e6480" stroke-width="1.6"/><line x1="829.2" y1="1183.4" x2="849.3" y2="1183.4" stroke="#b0b0b0" stroke-width="1.6"/><line x1="849.3" y1="1014.9" x2="849.3" y2="1183.4" stroke="#1f88ac" stroke-width="1.6"/><line x1="1059.6" y1="1014.9" x2="1059.6" y2="1202" stroke="#1f88ac" stroke-width="1.6"/><line x1="1270" y1="1014.9" x2="1270" y2="1202" stroke="#1f88ac" stroke-width="1.6"/><line x1="1481.4" y1="1014.9" x2="1481.4" y2="1202" stroke="#1f88ac" stroke-width="1.6"/><line x1="1691.6" y1="1014.9" x2="1691.6" y2="1202" stroke="#1f88ac" stroke-width="1.6"/><line x1="849.3" y1="1183.4" x2="849.3" y2="1202" stroke="#b0b0b0" stroke-width="1.6"/><line x1="969" y1="1024" x2="967.2" y2="1121.2" stroke="#e4e5e9" stroke-width="5.5"/><circle cx="969" cy="1024" r="5" fill="#e4e5e9" stroke="#fff" stroke-width="1.2"/><circle cx="967.2" cy="1121.2" r="5" fill="#e4e5e9" stroke="#fff" stroke-width="1.2"/><circle cx="879.8" cy="1127" r="5" fill="#ffcd56" stroke="#fff" stroke-width="1.2"/><path d="M879.8 1154.7 L1615 1151.1" stroke="#2c9fe8" stroke-width="6.5" fill="none"/><circle cx="879.8" cy="1154.7" r="5.2" fill="#2c9fe8" stroke="#fff" stroke-width="1.2"/><circle cx="1615" cy="1151.1" r="5.6" fill="#2c9fe8" stroke="#fff" stroke-width="1.2"/><line x1="879.8" y1="1110.9" x2="896" y2="1164.9" stroke="#ff6384" stroke-width="5.5"/><circle cx="879.8" cy="1110.9" r="5" fill="#ff6384" stroke="#fff" stroke-width="1.2"/><circle cx="896" cy="1164.9" r="5" fill="#ff6384" stroke="#fff" stroke-width="1.2"/></svg>
<div class="t" style="left:750.81px;top:1003.47px;font-size:23.3px;line-height:23.3px;color:#222222;font-family:'Liberation Sans',sans-serif;">600000</div>
<div class="t" style="left:750.81px;top:1059.47px;font-size:23.3px;line-height:23.3px;color:#222222;font-family:'Liberation Sans',sans-serif;">400000</div>
<div class="t" style="left:750.81px;top:1116.37px;font-size:23.3px;line-height:23.3px;color:#222222;font-family:'Liberation Sans',sans-serif;">200000</div>
<div class="t" style="left:815.58px;top:1171.97px;font-size:23.3px;line-height:23.3px;color:#222222;font-family:'Liberation Sans',sans-serif;">0</div>
<div class="t" style="left:726px;top:1098.5px;font-family:'Liberation Sans',sans-serif;font-size:23px;line-height:23px;color:#222;transform:translate(-50%,-50%) rotate(-90deg) scaleX(1.03);">max_duration</div>
<div class="t" style="left:649.30px;top:1193.50px;width:200px;height:23px;text-align:right;font-family:'Liberation Sans',sans-serif;font-size:24.4px;line-height:24.4px;color:#222;transform-origin:100% 50%;transform:translate(-0.5px,-2.5px) rotate(-45deg);">Oct 11, 2017</div>
<div class="t" style="left:859.60px;top:1193.50px;width:200px;height:23px;text-align:right;font-family:'Liberation Sans',sans-serif;font-size:24.4px;line-height:24.4px;color:#222;transform-origin:100% 50%;transform:translate(-0.5px,-2.5px) rotate(-45deg);">Oct 13, 2017</div>
<div class="t" style="left:1070.00px;top:1193.50px;width:200px;height:23px;text-align:right;font-family:'Liberation Sans',sans-serif;font-size:24.4px;line-height:24.4px;color:#222;transform-origin:100% 50%;transform:translate(-0.5px,-2.5px) rotate(-45deg);">Oct 15, 2017</div>
<div class="t" style="left:1281.40px;top:1193.50px;width:200px;height:23px;text-align:right;font-family:'Liberation Sans',sans-serif;font-size:24.4px;line-height:24.4px;color:#222;transform-origin:100% 50%;transform:translate(-0.5px,-2.5px) rotate(-45deg);">Oct 17, 2017</div>
<div class="t" style="left:1491.60px;top:1193.50px;width:200px;height:23px;text-align:right;font-family:'Liberation Sans',sans-serif;font-size:24.4px;line-height:24.4px;color:#222;transform-origin:100% 50%;transform:translate(-0.5px,-2.5px) rotate(-45deg);">Oct 19, 2017</div>
<div class="t" style="left:1162.91px;top:1347.53px;font-size:23px;line-height:23px;color:#222222;font-family:'Liberation Sans',sans-serif;letter-spacing:0.518px;">last_execution_time</div>
<div style="left:1758px;top:889.5px;width:1041.6999999999998px;height:506.5px;background:#e9e9e9;"></div>
<div style="left:1763.7px;top:895.2px;width:1030.3px;height:495.0999999999999px;background:#fffffe;"></div>
<div class="t" style="left:1773.53px;top:900.79px;font-size:26px;line-height:26px;color:#3c3c3c;font-family:'Liberation Sans',sans-serif;letter-spacing:0.712px;">Space used by tables</div>
<div style="left:2764.20px;top:919.00px;width:3.8px;height:3.8px;border-radius:50%;background:#333"></div>
<div style="left:2771.00px;top:919.00px;width:3.8px;height:3.8px;border-radius:50%;background:#333"></div>
<div style="left:2777.80px;top:919.00px;width:3.8px;height:3.8px;border-radius:50%;background:#333"></div>
<div style="left:1804.4px;top:968px;width:84.6px;height:29px;box-sizing:border-box;border:5px solid #ff6384;background:#ffa1b5"></div>
<div class="t" style="left:1896.51px;top:973.03px;font-size:23px;line-height:23px;color:#222222;font-family:'Liberation Sans',sans-serif;letter-spacing:0.787px;text-decoration:line-through;">rows_count</div>
<div style="left:2038.4px;top:968px;width:84.6px;height:29px;box-sizing:border-box;border:5px solid #36a2eb;background:#86c7f3"></div>
<div class="t" style="left:2131.66px;top:973.03px;font-size:23px;line-height:23px;color:#222222;font-family:'Liberation Sans',sans-serif;letter-spacing:0.424px;">total_pages</div>
<div style="left:2273.3px;top:968px;width:84.6px;height:29px;box-sizing:border-box;border:5px solid #ffce56;background:#ffe29a"></div>
<div class="t" style="left:2365.41px;top:973.03px;font-size:23px;line-height:23px;color:#222222;font-family:'Liberation Sans',sans-serif;letter-spacing:0.550px;">used_pages</div>
<div style="left:2512.9px;top:968px;width:84.6px;height:29px;box-sizing:border-box;border:5px solid #e7e9ed;background:#f0f1f4"></div>
<div class="t" style="left:2605.58px;top:973.03px;font-size:23px;line-height:23px;color:#222222;font-family:'Liberation Sans',sans-serif;letter-spacing:0.617px;">data_pages</div>
<div style="left:1849.5px;top:1011.4px;width:84.6px;height:29px;box-sizing:border-box;border:5px solid #4bc0c0;background:#93d9d9"></div>
<div class="t" style="left:1942.75px;top:1016.43px;font-size:23px;line-height:23px;color:#222222;font-family:'Liberation Sans',sans-serif;letter-spacing:0.507px;">total_space_MB</div>
<div style="left:2132px;top:1011.4px;width:84.6px;height:29px;box-sizing:border-box;border:5px solid #97bbcd;background:#c1d6e1"></div>
<div class="t" style="left:2224.11px;top:1016.43px;font-size:23px;line-height:23px;color:#222222;font-family:'Liberation Sans',sans-serif;letter-spacing:0.618px;">used_space_MB</div>
<div style="left:2420.5px;top:1011.4px;width:84.6px;height:29px;box-sizing:border-box;border:5px solid #dcdcdc;background:#e8e8e8"></div>
<div class="t" style="left:2513.18px;top:1016.43px;font-size:23px;line-height:23px;color:#222222;font-family:'Liberation Sans',sans-serif;letter-spacing:0.658px;">data_space_MB</div>
<svg style="left:2120px;top:1050px;" width="640" height="300" viewBox="2120 1050 640 300"><rect x="2153" y="1063.8" width="442.6999999999998" height="5.6" fill="#86c7f3"/><rect x="2153" y="1069.4" width="442.6999999999998" height="7.2" fill="#ffe29a"/><rect x="2153" y="1076.6000000000001" width="440.5999999999999" height="6.4" fill="#eef0f3"/><rect x="2153" y="1083.0" width="2.2" height="6.5" fill="#93d9d9"/><rect x="2153" y="1089.5" width="2.2" height="6.5" fill="#c1d6e1"/><rect x="2153" y="1115.6" width="380" height="5.6" fill="#86c7f3"/><rect x="2153" y="1121.2" width="371.9000000000001" height="7.2" fill="#ffe29a"/><rect x="2153" y="1128.4" width="369.3000000000002" height="6.4" fill="#eef0f3"/><rect x="2153" y="1134.8" width="2.2" height="6.5" fill="#93d9d9"/><rect x="2153" y="1141.3" width="2.2" height="6.5" fill="#c1d6e1"/><rect x="2153" y="1167.3" width="193.69999999999982" height="5.6" fill="#86c7f3"/><rect x="2153" y="1172.9" width="193.69999999999982" height="7.2" fill="#ffe29a"/><rect x="2153" y="1180.1000000000001" width="192.4000000000001" height="6.4" fill="#eef0f3"/><rect x="2153" y="1186.5" width="2.2" height="6.5" fill="#93d9d9"/><rect x="2153" y="1193.0" width="2.2" height="6.5" fill="#c1d6e1"/><rect x="2153" y="1218.8" width="179.5" height="5.6" fill="#86c7f3"/><rect x="2153" y="1224.4" width="179.5" height="7.2" fill="#ffe29a"/><rect x="2153" y="1231.6000000000001" width="179.5" height="6.4" fill="#eef0f3"/><rect x="2153" y="1238.0" width="2.2" height="6.5" fill="#93d9d9"/><rect x="2153" y="1244.5" width="2.2" height="6.5" fill="#c1d6e1"/><rect x="2153" y="1270.3" width="44.69999999999982" height="5.6" fill="#86c7f3"/><rect x="2153" y="1275.9" width="43" height="7.2" fill="#ffe29a"/><rect x="2153" y="1283.1000000000001" width="43" height="6.4" fill="#eef0f3"/><rect x="2153" y="1289.5" width="2.2" height="6.5" fill="#93d9d9"/><rect x="2153" y="1296.0" width="2.2" height="6.5" fill="#c1d6e1"/><line x1="2133" y1="1058.2" x2="2735.3" y2="1058.2" stroke="#b8b8b8" stroke-width="1.6"/><line x1="2133" y1="1110" x2="2735.3" y2="1110" stroke="#1f88ac" stroke-width="1.6"/><line x1="2133" y1="1161.7" x2="2735.3" y2="1161.7" stroke="#1f88ac" stroke-width="1.6"/><line x1="2133" y1="1213.2" x2="2735.3" y2="1213.2" stroke="#1f88ac" stroke-width="1.6"/><line x1="2133" y1="1264.7" x2="2735.3" y2="1264.7" stroke="#1f88ac" stroke-width="1.6"/><line x1="2133" y1="1315.8" x2="2735.3" y2="1315.8" stroke="#1f88ac" stroke-width="1.6"/><line x1="2153" y1="1058.2" x2="2153" y2="1315.8" stroke="#1f88ac" stroke-width="1.6"/><line x1="2347.6" y1="1058.2" x2="2347.6" y2="1315.8" stroke="#1f88ac" stroke-width="1.6"/><line x1="2541.6" y1="1058.2" x2="2541.6" y2="1315.8" stroke="#1f88ac" stroke-width="1.6"/><line x1="2735.3" y1="1058.2" x2="2735.3" y2="1315.8" stroke="#1f88ac" stroke-width="1.6"/><line x1="2153" y1="1315.8" x2="2153" y2="1336" stroke="#b8b8b8" stroke-width="1.6"/></svg>
<div class="t" style="left:2046.93px;top:1072.73px;font-size:23px;line-height:23px;color:#222222;font-family:'Liberation Sans',sans-serif;letter-spacing:0.352px;">Invoices</div>
<div class="t" style="left:1782.85px;top:1124.53px;font-size:23px;line-height:23px;color:#222222;font-family:'Liberation Sans',sans-serif;letter-spacing:0.459px;">ColdRoomTemperatures_Archive</div>
<div class="t" style="left:1993.93px;top:1176.23px;font-size:23px;line-height:23px;color:#222222;font-family:'Liberation Sans',sans-serif;letter-spacing:1.090px;">InvoiceLines</div>
<div class="t" style="left:2015.96px;top:1227.73px;font-size:23px;line-height:23px;color:#222222;font-family:'Liberation Sans',sans-serif;letter-spacing:0.456px;">OrderLines</div>
<div class="t" style="left:1893.85px;top:1279.23px;font-size:23px;line-height:23px;color:#222222;font-family:'Liberation Sans',sans-serif;letter-spacing:0.500px;">CustomerTransactions</div>
<div class="t" style="left:2145.42px;top:1337.13px;font-size:23px;line-height:23px;color:#222222;font-family:'Liberation Sans',sans-serif;transform:scaleX(1.1775);transform-origin:0 0;">0</div>
<div class="t" style="left:2320.68px;top:1337.13px;font-size:23px;line-height:23px;color:#222222;font-family:'Liberation Sans',sans-serif;letter-spacing:0.850px;">5000</div>
<div class="t" style="left:2507.38px;top:1337.13px;font-size:23px;line-height:23px;color:#222222;font-family:'Liberation Sans',sans-serif;letter-spacing:0.897px;">10000</div>
<div class="t" style="left:2701.08px;top:1337.13px;font-size:23px;line-height:23px;color:#222222;font-family:'Liberation Sans',sans-serif;letter-spacing:0.897px;">15000</div>
<div style="left:688px;top:1425px;width:506.5px;height:150px;background:#e9e9e9;"></div>
<div style="left:693.7px;top:1430.7px;width:495.0999999999999px;height:144.29999999999995px;background:#fffffe;"></div>
<div class="t" style="left:702.62px;top:1436.29px;font-size:26px;line-height:26px;color:#3c3c3c;font-family:'Liberation Sans',sans-serif;letter-spacing:0.700px;">Missing index and PKs</div>
<div style="left:1159.00px;top:1454.50px;width:3.8px;height:3.8px;border-radius:50%;background:#333"></div>
<div style="left:1165.80px;top:1454.50px;width:3.8px;height:3.8px;border-radius:50%;background:#333"></div>
<div style="left:1172.60px;top:1454.50px;width:3.8px;height:3.8px;border-radius:50%;background:#333"></div>
<div class="t" style="left:722.64px;top:1484.37px;font-size:37px;line-height:37px;color:#333333;font-family:'Liberation Sans',sans-serif;transform:scaleX(1.2556);transform-origin:0 0;font-weight:300;">0</div>
<div class="t" style="left:757.80px;top:1496.63px;font-size:25px;line-height:25px;color:#3c3c3c;font-family:'Liberation Sans',sans-serif;letter-spacing:1.173px;">Tables with Missing Indexes</div>
<div class="t" style="left:722.64px;top:1524.17px;font-size:37px;line-height:37px;color:#333333;font-family:'Liberation Sans',sans-serif;transform:scaleX(1.2556);transform-origin:0 0;">0</div>
<div class="t" style="left:756.30px;top:1535.83px;font-size:25px;line-height:25px;color:#3c3c3c;font-family:'Liberation Sans',sans-serif;letter-spacing:1.208px;">Number of Missing Indexes</div>
<div class="t" style="left:722.64px;top:1564.17px;font-size:37px;line-height:37px;color:#333333;font-family:'Liberation Sans',sans-serif;transform:scaleX(1.2556);transform-origin:0 0;">0</div>
<div style="left:1223.4px;top:1425px;width:505.89999999999986px;height:150px;background:#e9e9e9;"></div>
<div style="left:1229.1000000000001px;top:1430.7px;width:494.4999999999998px;height:144.29999999999995px;background:#fffffe;"></div>
<div class="t" style="left:1238.02px;top:1436.29px;font-size:26px;line-height:26px;color:#3c3c3c;font-family:'Liberation Sans',sans-serif;letter-spacing:0.710px;">Disk Usage</div>
<div style="left:1693.80px;top:1454.50px;width:3.8px;height:3.8px;border-radius:50%;background:#333"></div>
<div style="left:1700.60px;top:1454.50px;width:3.8px;height:3.8px;border-radius:50%;background:#333"></div>
<div style="left:1707.40px;top:1454.50px;width:3.8px;height:3.8px;border-radius:50%;background:#333"></div>
<div style="left:1352.8px;top:1506.3px;width:79.60000000000014px;height:22.700000000000045px;background:#ffa1b5;"></div>
<div class="t" style="left:1443.08px;top:1507.83px;font-size:23px;line-height:23px;color:#222222;font-family:'Liberation Sans',sans-serif;letter-spacing:0.676px;">Used_Space</div>
<div style="left:1333.5px;top:1549.6px;width:79.09999999999991px;height:22.600000000000136px;background:#86c7f3;"></div>
<div class="t" style="left:1424.20px;top:1551.03px;font-size:23px;line-height:23px;color:#222222;font-family:'Liberation Sans',sans-serif;letter-spacing:0.368px;">Available_Space</div>
<div style="left:1758px;top:1425px;width:506.6999999999998px;height:150px;background:#e9e9e9;"></div>
<div style="left:1763.7px;top:1430.7px;width:495.29999999999995px;height:144.29999999999995px;background:#fffffe;"></div>
<div class="t" style="left:1772.62px;top:1436.29px;font-size:26px;line-height:26px;color:#3c3c3c;font-family:'Liberation Sans',sans-serif;letter-spacing:0.643px;">Data file space usage (MB)</div>
<div style="left:2229.20px;top:1454.50px;width:3.8px;height:3.8px;border-radius:50%;background:#333"></div>
<div style="left:2236.00px;top:1454.50px;width:3.8px;height:3.8px;border-radius:50%;background:#333"></div>
<div style="left:2242.80px;top:1454.50px;width:3.8px;height:3.8px;border-radius:50%;background:#333"></div>
<div style="left:1831px;top:1506px;width:79.5px;height:22.700000000000045px;background:#ffa1b5;"></div>
<div class="t" style="left:1921.01px;top:1507.53px;font-size:23px;line-height:23px;color:#222222;font-family:'Liberation Sans',sans-serif;letter-spacing:0.503px;">reserved</div>
<div style="left:2033.3px;top:1506px;width:79.39999999999986px;height:22.700000000000045px;background:#86c7f3;"></div>
<div class="t" style="left:2124.08px;top:1507.53px;font-size:23px;line-height:23px;color:#222222;font-family:'Liberation Sans',sans-serif;letter-spacing:0.895px;">data</div>
<div style="left:1832.3px;top:1549.7px;width:79.40000000000009px;height:25.299999999999955px;background:#ffe29a;"></div>
<div class="t" style="left:1922.31px;top:1551.03px;font-size:23px;line-height:23px;color:#222222;font-family:'Liberation Sans',sans-serif;letter-spacing:0.939px;">index</div>
<div style="left:2001px;top:1549.7px;width:79.5px;height:25.299999999999955px;background:#eef0f3;"></div>
<div class="t" style="left:2091.51px;top:1551.03px;font-size:23px;line-height:23px;color:#222222;font-family:'Liberation Sans',sans-serif;letter-spacing:0.810px;">unused</div>
<div style="left:2293.9px;top:1425px;width:505.7999999999997px;height:150px;background:#e9e9e9;"></div>
<div style="left:2299.6px;top:1430.7px;width:494.4000000000001px;height:144.29999999999995px;background:#fffffe;"></div>
<div style="left:2318.8px;top:1451px;width:455.1999999999998px;height:49.799999999999955px;background:#c8c8c8;"></div>
<div style="left:2320.8px;top:1453px;width:451.1999999999998px;height:45.799999999999955px;background:#ffffff;"></div>
<div class="t" style="left:2327.88px;top:1464.83px;font-size:25px;line-height:25px;color:#8a8a8a;font-family:'Liberation Sans',sans-serif;letter-spacing:0.936px;">Search by name of type (a:, t:, v:, f...</div>
<div style="left:1px;top:1575px;width:2842px;height:35px;background:#007acc;"></div>
<div style="left:1px;top:1610px;width:2842px;height:1px;background:#d8d0c8;"></div>
<svg style="left:22px;top:1580px;" width="30" height="32" viewBox="22 1580 30 32"><g fill="none" stroke="#fff" stroke-width="2"><circle cx="33" cy="1588.5" r="3"/><circle cx="43.3" cy="1592.3" r="3"/><circle cx="33" cy="1606.3" r="3"/><path d="M33 1591.5 V1603.3 M43.3 1595.3 C43.3 1601 33 1598.5 33 1603"/></g></svg>
<div class="t" style="left:53.01px;top:1584.34px;font-size:27px;line-height:27px;color:#ffffff;font-family:'Liberation Sans',sans-serif;transform:scaleX(0.9620);transform-origin:0 0;-webkit-text-stroke:0.35px #fff;">master*</div>
<svg style="left:168px;top:1582px;" width="32" height="32" viewBox="168 1582 32 32"><g fill="none" stroke="#fff" stroke-width="2.6"><path d="M175.2 1597 A8.3 8.3 0 0 1 190 1592"/><path d="M191.2 1598.5 A8.3 8.3 0 0 1 176.5 1603.3"/></g><path d="M192.5 1586.5 L192.5 1595.5 L184 1594 Z" fill="#fff"/><path d="M174 1608.8 L174 1599.8 L182.5 1601.3 Z" fill="#fff"/></svg>
<svg style="left:215px;top:1584px;" width="30" height="30" viewBox="215 1584 30 30"><circle cx="230" cy="1598.7" r="10.7" fill="#fff"/><g stroke="#007acc" stroke-width="2.8"><line x1="225.3" y1="1594" x2="234.7" y2="1603.4"/><line x1="234.7" y1="1594" x2="225.3" y2="1603.4"/></g></svg>
<div class="t" style="left:248.93px;top:1584.84px;font-size:27px;line-height:27px;color:#ffffff;font-family:'Liberation Sans',sans-serif;transform:scaleX(0.9877);transform-origin:0 0;-webkit-text-stroke:0.35px #fff;">0</div>
<svg style="left:268px;top:1584px;" width="32" height="28" viewBox="268 1584 32 28"><path d="M283.6 1588 L294.3 1608.8 H272.9 Z" fill="#fff" stroke="#fff" stroke-width="1" stroke-linejoin="round"/><rect x="282.6" y="1594.5" width="2" height="8" fill="#007acc"/><rect x="282.6" y="1604.3" width="2" height="2.2" fill="#007acc"/></svg>
<div class="t" style="left:302.93px;top:1584.84px;font-size:27px;line-height:27px;color:#ffffff;font-family:'Liberation Sans',sans-serif;transform:scaleX(0.9954);transform-origin:0 0;-webkit-text-stroke:0.35px #fff;">0</div>
<div class="t" style="left:1764.14px;top:1584.34px;font-size:27px;line-height:27px;color:#ffffff;font-family:'Liberation Sans',sans-serif;transform:scaleX(0.9438);transform-origin:0 0;-webkit-text-stroke:0.35px #fff;">kubernetes : WideWorldImporters</div>
<div class="t" style="left:2171.79px;top:1584.34px;font-size:27px;line-height:27px;color:#ffffff;font-family:'Liberation Sans',sans-serif;transform:scaleX(0.8831);transform-origin:0 0;-webkit-text-stroke:0.35px #fff;">Ln 1, Col 1</div>
<div class="t" style="left:2314.16px;top:1584.34px;font-size:27px;line-height:27px;color:#ffffff;font-family:'Liberation Sans',sans-serif;transform:scaleX(0.9382);transform-origin:0 0;-webkit-text-stroke:0.35px #fff;">Spaces: 4</div>
<div class="t" style="left:2456.06px;top:1584.34px;font-size:27px;line-height:27px;color:#ffffff;font-family:'Liberation Sans',sans-serif;transform:scaleX(0.9590);transform-origin:0 0;-webkit-text-stroke:0.35px #fff;">UTF-8</div>
<div class="t" style="left:2558.09px;top:1584.34px;font-size:27px;line-height:27px;color:#ffffff;font-family:'Liberation Sans',sans-serif;transform:scaleX(0.8861);transform-origin:0 0;-webkit-text-stroke:0.35px #fff;">LF</div>
<div class="t" style="left:2613.92px;top:1584.34px;font-size:27px;line-height:27px;color:#ffffff;font-family:'Liberation Sans',sans-serif;transform:scaleX(0.8850);transform-origin:0 0;-webkit-text-stroke:0.35px #fff;">SQL</div>
<div class="t" style="left:2680.58px;top:1584.34px;font-size:27px;line-height:27px;color:#ffffff;font-family:'Liberation Sans',sans-serif;transform:scaleX(0.8904);transform-origin:0 0;-webkit-text-stroke:0.35px #fff;">MSSQL</div>
<svg style="left:2784px;top:1582px;" width="32" height="30" viewBox="2784 1582 32 30"><circle cx="2800.1" cy="1597.6" r="13.3" fill="#fff"/><circle cx="2795.6" cy="1593.3" r="1.9" fill="#007acc"/><circle cx="2804.6" cy="1593.3" r="1.9" fill="#007acc"/><path d="M2792.6 1599.2 A7.8 7.8 0 0 0 2807.6 1599.2" fill="none" stroke="#007acc" stroke-width="2.3"/></svg>
<div style="left:2004.8px;top:175.2px;width:461.20000000000005px;height:425.8px;background:#efefef;border-radius:11px;box-shadow:0 6px 26px rgba(0,0,0,0.28),0 0 0 1px rgba(0,0,0,0.13);"></div>
<div style="left:2004.8px;top:221px;width:461.20000000000005px;height:37.60000000000002px;background:#4a9af8;"></div>
<div style="left:2004.8px;top:268.5px;width:461.20000000000005px;height:4.0px;background:#dadada;"></div>
<div style="left:2004.8px;top:405.5px;width:461.20000000000005px;height:4.0px;background:#dadada;"></div>
<div style="left:2004.8px;top:541.7px;width:461.20000000000005px;height:4.0px;background:#dadada;"></div>
<div class="t" style="left:2045.44px;top:187.02px;font-size:27.5px;line-height:27.5px;color:#2b2b2b;font-family:'Liberation Sans',sans-serif;transform:scaleX(1.0617);transform-origin:0 0;">Go to Definition</div>
<div class="t" style="left:2421.85px;top:192.97px;font-size:21.3px;line-height:21.3px;color:#2b2b2b;font-family:'Liberation Sans',sans-serif;transform:scaleX(0.9685);transform-origin:0 0;-webkit-text-stroke:0.5px #2b2b2b;">F12</div>
<div class="t" style="left:2044.66px;top:225.02px;font-size:27.5px;line-height:27.5px;color:#ffffff;font-family:'Liberation Sans',sans-serif;transform:scaleX(1.0169);transform-origin:0 0;">Peek Definition</div>
<div class="t" style="left:2421.85px;top:230.77px;font-size:21.3px;line-height:21.3px;color:#ffffff;font-family:'Liberation Sans',sans-serif;transform:scaleX(0.9685);transform-origin:0 0;-webkit-text-stroke:0.5px #fff;">F12</div>
<div class="t" style="left:2045.47px;top:286.22px;font-size:27.5px;line-height:27.5px;color:#2b2b2b;font-family:'Liberation Sans',sans-serif;transform:scaleX(1.0433);transform-origin:0 0;">Change All Occurrences</div>
<div class="t" style="left:2421.19px;top:292.27px;font-size:21.3px;line-height:21.3px;color:#2b2b2b;font-family:'Liberation Sans',sans-serif;transform:scaleX(1.0614);transform-origin:0 0;-webkit-text-stroke:0.5px #2b2b2b;">F2</div>
<div class="t" style="left:2044.59px;top:324.42px;font-size:27.5px;line-height:27.5px;color:#2b2b2b;font-family:'Liberation Sans',sans-serif;transform:scaleX(1.0521);transform-origin:0 0;">Format Document</div>
<div class="t" style="left:2421.81px;top:324.42px;font-size:27.5px;line-height:27.5px;color:#2b2b2b;font-family:'Liberation Sans',sans-serif;transform:scaleX(0.9944);transform-origin:0 0;">F</div>
<div class="t" style="left:2044.58px;top:363.02px;font-size:27.5px;line-height:27.5px;color:#2b2b2b;font-family:'Liberation Sans',sans-serif;transform:scaleX(1.0540);transform-origin:0 0;">Format Selection [</div>
<div class="t" style="left:2304.77px;top:363.02px;font-size:27.5px;line-height:27.5px;color:#2b2b2b;font-family:'Liberation Sans',sans-serif;transform:scaleX(1.1953);transform-origin:0 0;">K</div>
<div class="t" style="left:2359.25px;top:363.02px;font-size:27.5px;line-height:27.5px;color:#2b2b2b;font-family:'Liberation Sans',sans-serif;transform:scaleX(1.1577);transform-origin:0 0;">F]</div>
<div class="t" style="left:2045.43px;top:422.72px;font-size:27.5px;line-height:27.5px;color:#2b2b2b;font-family:'Liberation Sans',sans-serif;transform:scaleX(1.0667);transform-origin:0 0;">Cut</div>
<div class="t" style="left:2421.03px;top:422.72px;font-size:27.5px;line-height:27.5px;color:#2b2b2b;font-family:'Liberation Sans',sans-serif;transform:scaleX(1.1261);transform-origin:0 0;">X</div>
<div class="t" style="left:2045.48px;top:460.72px;font-size:27.5px;line-height:27.5px;color:#2b2b2b;font-family:'Liberation Sans',sans-serif;transform:scaleX(1.0344);transform-origin:0 0;">Copy</div>
<div class="t" style="left:2420.23px;top:460.72px;font-size:27.5px;line-height:27.5px;color:#2b2b2b;font-family:'Liberation Sans',sans-serif;transform:scaleX(1.1453);transform-origin:0 0;">C</div>
<div class="t" style="left:2044.60px;top:498.12px;font-size:27.5px;line-height:27.5px;color:#2b2b2b;font-family:'Liberation Sans',sans-serif;transform:scaleX(1.0475);transform-origin:0 0;">Paste</div>
<div class="t" style="left:2421.65px;top:498.12px;font-size:27.5px;line-height:27.5px;color:#2b2b2b;font-family:'Liberation Sans',sans-serif;transform:scaleX(1.0659);transform-origin:0 0;">V</div>
<div class="t" style="left:2045.46px;top:559.62px;font-size:27.5px;line-height:27.5px;color:#2b2b2b;font-family:'Liberation Sans',sans-serif;transform:scaleX(1.0455);transform-origin:0 0;">Command Palette...</div>
<div class="t" style="left:2419.08px;top:559.62px;font-size:27.5px;line-height:27.5px;color:#2b2b2b;font-family:'Liberation Sans',sans-serif;transform:scaleX(1.2370);transform-origin:0 0;">P</div>
<svg style="left:2260px;top:200px;" width="240" height="400" viewBox="2260 200 240 400"><path d="M2393.2 229.65 H2400.955 L2409.415 247.55 H2416.7 M2406.83 229.65 H2416.7" fill="none" stroke="#ffffff" stroke-width="2.5"/><path d="M2405.076 296.572 V303.228 M2411.924 296.572 V303.228 M2405.076 296.572 H2411.924 M2405.076 303.228 H2411.924 M2405.076 296.572 H2401.652 A3.4239999999999418 3.4239999999999418 0 1 1 2405.076 293.1480000000001 Z M2411.924 296.572 V293.1480000000001 A3.4239999999999418 3.4239999999999418 0 1 1 2415.348 296.572 Z M2405.076 303.228 V306.65199999999993 A3.4239999999999418 3.4239999999999418 0 1 1 2401.652 303.228 Z M2411.924 303.228 H2415.348 A3.4239999999999418 3.4239999999999418 0 1 1 2411.924 306.65199999999993 Z" fill="none" stroke="#2b2b2b" stroke-width="2.2" stroke-linejoin="round"/><path d="M2367.1 328.55 H2374.921 L2383.453 346.45 H2390.8 M2380.846 328.55 H2390.8" fill="none" stroke="#2b2b2b" stroke-width="2.5"/><path d="M2408.45 326.90000000000003 L2418.9 336.75 H2413.763 V346.59999999999997 H2403.137 V336.75 H2398.0 Z" fill="none" stroke="#2b2b2b" stroke-width="2.2" stroke-linejoin="miter"/><path d="M2291.208 372.308 V379.09200000000004 M2297.9919999999997 372.308 V379.09200000000004 M2291.208 372.308 H2297.9919999999997 M2291.208 379.09200000000004 H2297.9919999999997 M2291.208 372.308 H2287.8160000000003 A3.391999999999971 3.391999999999971 0 1 1 2291.208 368.916 Z M2297.9919999999997 372.308 V368.916 A3.391999999999971 3.391999999999971 0 1 1 2301.3839999999996 372.308 Z M2291.208 379.09200000000004 V382.48400000000004 A3.391999999999971 3.391999999999971 0 1 1 2287.8160000000003 379.09200000000004 Z M2297.9919999999997 379.09200000000004 H2301.3839999999996 A3.391999999999971 3.391999999999971 0 1 1 2297.9919999999997 382.48400000000004 Z" fill="none" stroke="#2b2b2b" stroke-width="2.2" stroke-linejoin="round"/><path d="M2344.244 372.308 V379.09200000000004 M2351.156 372.308 V379.09200000000004 M2344.244 372.308 H2351.156 M2344.244 379.09200000000004 H2351.156 M2344.244 372.308 H2340.788 A3.4559999999999853 3.4559999999999853 0 1 1 2344.244 368.85200000000003 Z M2351.156 372.308 V368.85200000000003 A3.4559999999999853 3.4559999999999853 0 1 1 2354.612 372.308 Z M2344.244 379.09200000000004 V382.548 A3.4559999999999853 3.4559999999999853 0 1 1 2340.788 379.09200000000004 Z M2351.156 379.09200000000004 H2354.612 A3.4559999999999853 3.4559999999999853 0 1 1 2351.156 382.548 Z" fill="none" stroke="#2b2b2b" stroke-width="2.2" stroke-linejoin="round"/><path d="M2405.076 432.272 V438.928 M2411.924 432.272 V438.928 M2405.076 432.272 H2411.924 M2405.076 438.928 H2411.924 M2405.076 432.272 H2401.652 A3.4239999999999418 3.4239999999999418 0 1 1 2405.076 428.84800000000007 Z M2411.924 432.272 V428.84800000000007 A3.4239999999999418 3.4239999999999418 0 1 1 2415.348 432.272 Z M2405.076 438.928 V442.3519999999999 A3.4239999999999418 3.4239999999999418 0 1 1 2401.652 438.928 Z M2411.924 438.928 H2415.348 A3.4239999999999418 3.4239999999999418 0 1 1 2411.924 442.3519999999999 Z" fill="none" stroke="#2b2b2b" stroke-width="2.2" stroke-linejoin="round"/><path d="M2405.076 470.272 V476.928 M2411.924 470.272 V476.928 M2405.076 470.272 H2411.924 M2405.076 476.928 H2411.924 M2405.076 470.272 H2401.652 A3.4239999999999418 3.4239999999999418 0 1 1 2405.076 466.84800000000007 Z M2411.924 470.272 V466.84800000000007 A3.4239999999999418 3.4239999999999418 0 1 1 2415.348 470.272 Z M2405.076 476.928 V480.3519999999999 A3.4239999999999418 3.4239999999999418 0 1 1 2401.652 476.928 Z M2411.924 476.928 H2415.348 A3.4239999999999418 3.4239999999999418 0 1 1 2411.924 480.3519999999999 Z" fill="none" stroke="#2b2b2b" stroke-width="2.2" stroke-linejoin="round"/><path d="M2405.076 507.67199999999997 V514.328 M2411.924 507.67199999999997 V514.328 M2405.076 507.67199999999997 H2411.924 M2405.076 514.328 H2411.924 M2405.076 507.67199999999997 H2401.652 A3.4239999999999418 3.4239999999999418 0 1 1 2405.076 504.24800000000005 Z M2411.924 507.67199999999997 V504.24800000000005 A3.4239999999999418 3.4239999999999418 0 1 1 2415.348 507.67199999999997 Z M2405.076 514.328 V517.752 A3.4239999999999418 3.4239999999999418 0 1 1 2401.652 514.328 Z M2411.924 514.328 H2415.348 A3.4239999999999418 3.4239999999999418 0 1 1 2411.924 517.752 Z" fill="none" stroke="#2b2b2b" stroke-width="2.2" stroke-linejoin="round"/><path d="M2381.1 562.1 L2391.4 571.95 H2386.344 V581.8 H2375.8559999999998 V571.95 H2370.7999999999997 Z" fill="none" stroke="#2b2b2b" stroke-width="2.2" stroke-linejoin="miter"/><path d="M2405.076 569.172 V575.828 M2411.924 569.172 V575.828 M2405.076 569.172 H2411.924 M2405.076 575.828 H2411.924 M2405.076 569.172 H2401.652 A3.4239999999999418 3.4239999999999418 0 1 1 2405.076 565.748 Z M2411.924 569.172 V565.748 A3.4239999999999418 3.4239999999999418 0 1 1 2415.348 569.172 Z M2405.076 575.828 V579.252 A3.4239999999999418 3.4239999999999418 0 1 1 2401.652 575.828 Z M2411.924 575.828 H2415.348 A3.4239999999999418 3.4239999999999418 0 1 1 2411.924 579.252 Z" fill="none" stroke="#2b2b2b" stroke-width="2.2" stroke-linejoin="round"/></svg>
</body></html>
